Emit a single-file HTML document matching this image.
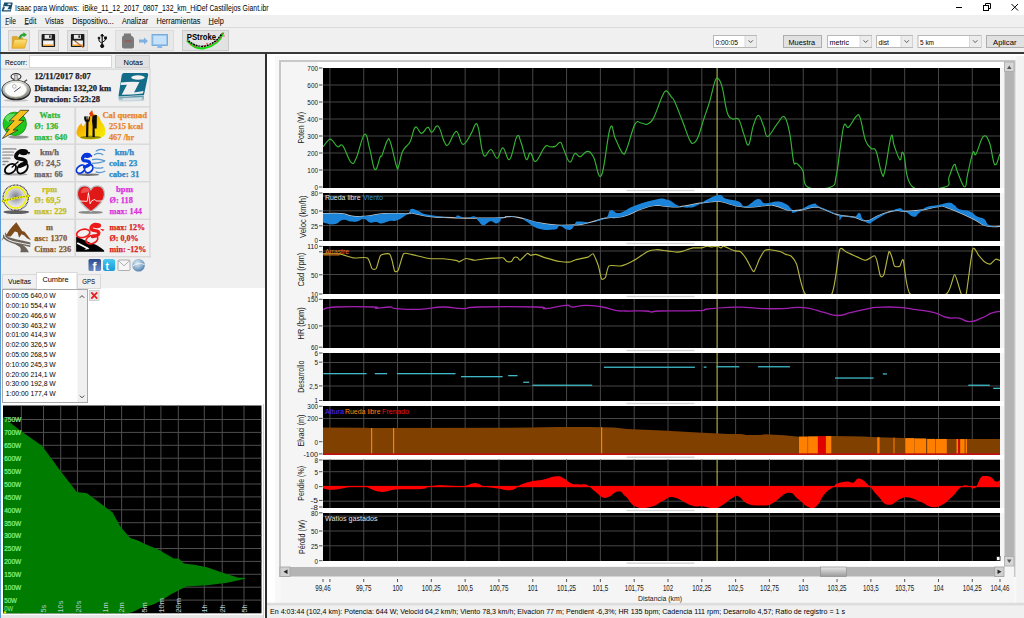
<!DOCTYPE html>
<html><head><meta charset="utf-8"><style>
html,body{margin:0;padding:0;width:1024px;height:618px;overflow:hidden;background:#f0f0f0}
svg{display:block}
text{white-space:pre}
</style></head><body>
<svg width="1024" height="618" viewBox="0 0 1024 618">
<rect x="0" y="0" width="1024" height="618" fill="#f0f0f0" />
<rect x="0" y="0" width="1024" height="15" fill="#ffffff" />
<text x="15" y="11.2" font-family="Liberation Sans" font-size="8.7" font-weight="400" fill="#000" text-anchor="start" textLength="253.6" lengthAdjust="spacingAndGlyphs" >Isaac para Windows:  iBike_11_12_2017_0807_132_km_HiDef Castillejos Giant.ibr</text>
<path d="M4.2,2.5 H12 Q12.8,2.5 12.6,3.4 L10.8,11.6 H2.2 Q1.5,11.6 1.7,10.8 Z" fill="#174e6e"/>
<ellipse cx="9.3" cy="4.3" rx="1.9" ry="0.8" fill="#fff"/>
<path d="M3.6,6.3 H9.2 L7.4,9.3 H10.6 L10.3,10.3 H3.4 L5.2,7.3 H3.4 Z" fill="#fff"/>
<line x1="956" y1="7.5" x2="962" y2="7.5" stroke="#000" stroke-width="1" />
<rect x="983.5" y="5.5" width="5" height="5" fill="none" stroke="#000" stroke-width="1" />
<path d="M985.5,5.5 V3.5 H990.5 V8.5 H988.5" fill="none" stroke="#000" stroke-width="1"/>
<line x1="1011.5" y1="4" x2="1018" y2="10.5" stroke="#000" stroke-width="1" />
<line x1="1018" y1="4" x2="1011.5" y2="10.5" stroke="#000" stroke-width="1" />
<rect x="0" y="0" width="1" height="618" fill="#5b9bd5" />
<rect x="1" y="15" width="1023" height="12" fill="#f0f0f0" />
<text x="5.2" y="23.6" font-family="Liberation Sans" font-size="8.3" font-weight="400" fill="#000" text-anchor="start" textLength="10.8" lengthAdjust="spacingAndGlyphs" >File</text>
<text x="24.6" y="23.6" font-family="Liberation Sans" font-size="8.3" font-weight="400" fill="#000" text-anchor="start" textLength="11.7" lengthAdjust="spacingAndGlyphs" >Edit</text>
<text x="45" y="23.6" font-family="Liberation Sans" font-size="8.3" font-weight="400" fill="#000" text-anchor="start" textLength="18.7" lengthAdjust="spacingAndGlyphs" >Vistas</text>
<text x="72.2" y="23.6" font-family="Liberation Sans" font-size="8.3" font-weight="400" fill="#000" text-anchor="start" textLength="41.5" lengthAdjust="spacingAndGlyphs" >Dispositivo...</text>
<text x="121.9" y="23.6" font-family="Liberation Sans" font-size="8.3" font-weight="400" fill="#000" text-anchor="start" textLength="26.2" lengthAdjust="spacingAndGlyphs" >Analizar</text>
<text x="156.5" y="23.6" font-family="Liberation Sans" font-size="8.3" font-weight="400" fill="#000" text-anchor="start" textLength="43.9" lengthAdjust="spacingAndGlyphs" >Herramientas</text>
<text x="208.6" y="23.6" font-family="Liberation Sans" font-size="8.3" font-weight="400" fill="#000" text-anchor="start" textLength="15.2" lengthAdjust="spacingAndGlyphs" >Help</text>
<line x1="5.2" y1="24.5" x2="8.7" y2="24.5" stroke="#000" stroke-width="0.6" />
<line x1="24.6" y1="24.5" x2="28.6" y2="24.5" stroke="#000" stroke-width="0.6" />
<line x1="208.6" y1="24.5" x2="213.6" y2="24.5" stroke="#000" stroke-width="0.6" />
<rect x="1" y="27" width="1023" height="1" fill="#dadada" />
<rect x="1" y="28" width="1023" height="24" fill="#f0f0f0" />
<rect x="0" y="52" width="1024" height="2" fill="#383838" />
<rect x="8.5" y="30.5" width="21" height="20" fill="#e5e5e5" stroke="#d0d0d0" stroke-width="1" />
<rect x="38.5" y="30.5" width="20" height="20" fill="#e5e5e5" stroke="#d0d0d0" stroke-width="1" />
<rect x="67.5" y="30.5" width="20" height="20" fill="#e5e5e5" stroke="#d0d0d0" stroke-width="1" />
<rect x="115.5" y="30.5" width="58" height="20" fill="#e8e8e8" stroke="#dcdcdc" stroke-width="1" />
<rect x="182.5" y="30.5" width="46" height="20" fill="#e2e2e2" stroke="#cacaca" stroke-width="1" />
<defs><linearGradient id="fold" x1="0" y1="0" x2="0" y2="1"><stop offset="0" stop-color="#fbe27a"/><stop offset="1" stop-color="#f0b428"/></linearGradient></defs>
<path d="M12.2,47.5 V37.2 q0,-0.8 0.8,-0.8 h4 l1.2,1.3 h4.5 v2" fill="#e3a82a" stroke="#c88a18" stroke-width="0.5"/>
<path d="M11.8,48.3 L14.2,40 Q14.4,39.4 15,39.4 H26.6 Q27.2,39.4 27,40 L24.6,48.3 Z" fill="url(#fold)" stroke="#d49a20" stroke-width="0.6"/>
<path d="M19.5,38.5 Q20.5,34.5 24.2,34.6" fill="none" stroke="#2aa52a" stroke-width="2.2"/>
<path d="M23.3,32.2 L27,34.8 L23.5,37.3 Z" fill="#2aa52a"/>
<rect x="41.6" y="34" width="13.5" height="13" fill="#1a1a1a" rx="0.8"/>
<rect x="44.6" y="34.8" width="7" height="4" fill="#e8e8e8"/>
<rect x="49.1" y="35.3" width="1.5" height="2.5" fill="#222"/>
<rect x="43.1" y="40.5" width="10.5" height="5.5" fill="#f4f4f4"/>
<rect x="43.1" y="44.5" width="10.5" height="1.5" fill="#f0a030"/>
<rect x="70.9" y="34" width="13.5" height="13" fill="#1a1a1a" rx="0.8"/>
<rect x="73.9" y="34.8" width="7" height="4" fill="#e8e8e8"/>
<rect x="78.4" y="35.3" width="1.5" height="2.5" fill="#222"/>
<rect x="72.4" y="40.5" width="10.5" height="5.5" fill="#f4f4f4"/>
<rect x="72.4" y="44.5" width="10.5" height="1.5" fill="#f0a030"/>
<path d="M74.9,41 L83.4,47.5" stroke="#c07030" stroke-width="1.4"/>
<path d="M74.4,40.5 L75.9,41.2" stroke="#333" stroke-width="1"/>
<g fill="#111" stroke="#111"><line x1="102.2" y1="35" x2="102.2" y2="46" stroke-width="1.2"/><circle cx="102.2" cy="46" r="1.6"/><path d="M99,38.5 v2.5 l3.2,2.5 M105.5,38 v2 l-3.3,2.5" fill="none" stroke-width="1"/><circle cx="99" cy="38" r="0.9"/><rect x="104.6" y="37" width="1.8" height="1.8"/><path d="M100.8,36 L102.2,34 L103.6,36 Z"/></g>
<path d="M124,33.5 h7 v2 q3,1 3,4 v7 q0,2 -3,2 h-6 q-3,0 -3,-2 v-8 q0,-3 2,-3 z" fill="#7a7a7a"/>
<rect x="124.5" y="40" width="7" height="2" fill="#a05050" opacity="0.6"/>
<path d="M139,39.5 h5 v-2 l4,3.5 l-4,3.5 v-2 h-5 z" fill="#7fb0e0"/>
<rect x="152" y="34.5" width="15.5" height="11" fill="#9cc8f0" stroke="#6aa0d0" stroke-width="0.8"/>
<rect x="153.5" y="36" width="12.5" height="8" fill="#c6e2fa"/>
<path d="M158,45.5 h3.5 l1,2.5 h-5.5 z" fill="#8ab8e8"/>
<text x="186.8" y="39.9" font-family="Liberation Sans" font-size="9.2" font-weight="700" fill="#000" text-anchor="start" textLength="29.2" lengthAdjust="spacingAndGlyphs" >PStroke</text>
<path d="M187,40.5 Q196,50.5 205,48 Q219,45 223.5,32.5" fill="none" stroke="#12dd12" stroke-width="2"/>
<path d="M188.5,40.8 Q197,48 205,46 Q216,43.5 222,33.5" fill="none" stroke="#000" stroke-width="1.6" stroke-dasharray="2,0.8"/>
<circle cx="187.5" cy="41" r="0.75" fill="#ff3a3a"/>
<circle cx="191" cy="44.5" r="0.75" fill="#ff3a3a"/>
<circle cx="195" cy="46.5" r="0.75" fill="#ff3a3a"/>
<circle cx="199.5" cy="46.8" r="0.75" fill="#ff3a3a"/>
<circle cx="204" cy="45.7" r="0.75" fill="#ff3a3a"/>
<circle cx="207" cy="43.6" r="0.75" fill="#ff3a3a"/>
<circle cx="210" cy="44.5" r="0.75" fill="#ff3a3a"/>
<circle cx="213.5" cy="43.5" r="0.75" fill="#ff3a3a"/>
<circle cx="217" cy="41.5" r="0.75" fill="#ff3a3a"/>
<circle cx="220" cy="38" r="0.75" fill="#ff3a3a"/>
<circle cx="223" cy="33.5" r="0.75" fill="#ff3a3a"/>
<circle cx="224" cy="36" r="0.75" fill="#ff3a3a"/>
<rect x="713.5" y="35.5" width="43" height="12" fill="#ffffff" stroke="#b8b8b8" stroke-width="1" />
<rect x="745" y="36" width="11.5" height="11" fill="#ececec" />
<line x1="745" y1="36" x2="745" y2="47" stroke="#d8d8d8" stroke-width="1" />
<path d="M748.5,40.3 l2.2,2.2 l2.2,-2.2" fill="none" stroke="#333" stroke-width="0.8"/>
<text x="715.5" y="44.7" font-family="Liberation Sans" font-size="7.6" font-weight="400" fill="#000" text-anchor="start" textLength="22.5" lengthAdjust="spacingAndGlyphs" >0:00:05</text>
<rect x="783.5" y="35.5" width="38" height="12" fill="#e1e1e1" stroke="#adadad" stroke-width="1" />
<text x="788.5" y="44.7" font-family="Liberation Sans" font-size="7.9" font-weight="400" fill="#000" text-anchor="start" textLength="26.5" lengthAdjust="spacingAndGlyphs" >Muestra</text>
<rect x="827.5" y="35.5" width="44" height="12" fill="#ffffff" stroke="#b8b8b8" stroke-width="1" />
<rect x="860" y="36" width="11.5" height="11" fill="#ececec" />
<line x1="860" y1="36" x2="860" y2="47" stroke="#d8d8d8" stroke-width="1" />
<path d="M863.5,40.3 l2.2,2.2 l2.2,-2.2" fill="none" stroke="#333" stroke-width="0.8"/>
<text x="829.5" y="44.7" font-family="Liberation Sans" font-size="7.6" font-weight="400" fill="#000" text-anchor="start" textLength="19.5" lengthAdjust="spacingAndGlyphs" >metric</text>
<rect x="876.5" y="35.5" width="36" height="12" fill="#ffffff" stroke="#b8b8b8" stroke-width="1" />
<rect x="901" y="36" width="11.5" height="11" fill="#ececec" />
<line x1="901" y1="36" x2="901" y2="47" stroke="#d8d8d8" stroke-width="1" />
<path d="M904.5,40.3 l2.2,2.2 l2.2,-2.2" fill="none" stroke="#333" stroke-width="0.8"/>
<text x="878.5" y="44.7" font-family="Liberation Sans" font-size="7.6" font-weight="400" fill="#000" text-anchor="start" textLength="10.5" lengthAdjust="spacingAndGlyphs" >dist</text>
<rect x="918.0" y="35.5" width="63" height="12" fill="#ffffff" stroke="#b8b8b8" stroke-width="1" />
<rect x="969.5" y="36" width="11.5" height="11" fill="#ececec" />
<line x1="969.5" y1="36" x2="969.5" y2="47" stroke="#d8d8d8" stroke-width="1" />
<path d="M973.0,40.3 l2.2,2.2 l2.2,-2.2" fill="none" stroke="#333" stroke-width="0.8"/>
<text x="920.0" y="44.7" font-family="Liberation Sans" font-size="7.6" font-weight="400" fill="#000" text-anchor="start" textLength="14" lengthAdjust="spacingAndGlyphs" >5 km</text>
<rect x="986.5" y="35.5" width="39" height="12" fill="#e1e1e1" stroke="#adadad" stroke-width="1" />
<text x="993" y="44.7" font-family="Liberation Sans" font-size="7.6" font-weight="400" fill="#000" text-anchor="start" textLength="23.5" lengthAdjust="spacingAndGlyphs" >Aplicar</text>
<rect x="265" y="53" width="2" height="565" fill="#303030" />
<rect x="267" y="54" width="757" height="564" fill="#ffffff" />
<rect x="262" y="54" width="3" height="564" fill="#ffffff" />
<rect x="275" y="56" width="749" height="547" fill="#f8f8f8" />
<rect x="279" y="60" width="2" height="517" fill="#c8c8c8" />
<rect x="279" y="60" width="736" height="2" fill="#c8c8c8" />
<rect x="281" y="62" width="733" height="541" fill="#f5f5f5" />
<rect x="1014" y="60" width="1.5" height="517" fill="#c8c8c8" />
<rect x="1016.5" y="56" width="7.5" height="547" fill="#f2f2f2" />
<rect x="1" y="54" width="264" height="564" fill="#f0f0f0" />
<text x="5" y="64.6" font-family="Liberation Sans" font-size="7.8" font-weight="400" fill="#000" text-anchor="start" textLength="22" lengthAdjust="spacingAndGlyphs" >Recorr:</text>
<rect x="29.5" y="55.5" width="82" height="12" fill="#ffffff" stroke="#d6d6d6" stroke-width="1" />
<rect x="115.5" y="55.5" width="34" height="12" fill="#e1e1e1" stroke="#cfcfcf" stroke-width="1" />
<text x="123.5" y="64.6" font-family="Liberation Sans" font-size="7.8" font-weight="400" fill="#000" text-anchor="start" textLength="19.5" lengthAdjust="spacingAndGlyphs" >Notas</text>
<rect x="1" y="68.5" width="149.5" height="1.3" fill="#d8d8d8" />
<rect x="1" y="106.2" width="149.5" height="1.4" fill="#d8d8d8" />
<rect x="1" y="143.5" width="149.5" height="1.4" fill="#d8d8d8" />
<rect x="1" y="181" width="149.5" height="1.4" fill="#d8d8d8" />
<rect x="1" y="218.6" width="149.5" height="1.4" fill="#d8d8d8" />
<rect x="1" y="256" width="149.5" height="1.4" fill="#d8d8d8" />
<rect x="74.3" y="107" width="1.8" height="149.5" fill="#d8d8d8" />
<rect x="149.3" y="68.5" width="1.3" height="189" fill="#d8d8d8" />
<text x="34.4" y="79.3" font-family="Liberation Serif" font-size="8.1" font-weight="700" fill="#1a1a2a" text-anchor="start" textLength="56.5" lengthAdjust="spacingAndGlyphs" stroke="#1a1a2a" stroke-width="0.25">12/11/2017 8:07</text>
<text x="34.4" y="90.5" font-family="Liberation Serif" font-size="8.1" font-weight="700" fill="#1a1a2a" text-anchor="start" textLength="76.8" lengthAdjust="spacingAndGlyphs" stroke="#1a1a2a" stroke-width="0.25">Distancia: 132,20 km</text>
<text x="34.4" y="101.7" font-family="Liberation Serif" font-size="8.1" font-weight="700" fill="#1a1a2a" text-anchor="start" textLength="65.5" lengthAdjust="spacingAndGlyphs" stroke="#1a1a2a" stroke-width="0.25">Duracion: 5:23:28</text>
<text x="39.5" y="117.6" font-family="Liberation Serif" font-size="8.5" font-weight="700" fill="#2fb52f" text-anchor="start" textLength="20.7" lengthAdjust="spacingAndGlyphs" stroke="#2fb52f" stroke-width="0.25">Watts</text>
<text x="34.3" y="128.6" font-family="Liberation Serif" font-size="8.5" font-weight="700" fill="#2fb52f" text-anchor="start" textLength="24" lengthAdjust="spacingAndGlyphs" stroke="#2fb52f" stroke-width="0.25">Ø: 136</text>
<text x="34.3" y="139.6" font-family="Liberation Serif" font-size="8.5" font-weight="700" fill="#2fb52f" text-anchor="start" textLength="33" lengthAdjust="spacingAndGlyphs" stroke="#2fb52f" stroke-width="0.25">max: 640</text>
<text x="102.4" y="117.6" font-family="Liberation Serif" font-size="8.5" font-weight="700" fill="#e8862a" text-anchor="start" textLength="44.7" lengthAdjust="spacingAndGlyphs" stroke="#e8862a" stroke-width="0.25">Cal quemad</text>
<text x="108.9" y="128.6" font-family="Liberation Serif" font-size="8.5" font-weight="700" fill="#e8862a" text-anchor="start" textLength="34.3" lengthAdjust="spacingAndGlyphs" stroke="#e8862a" stroke-width="0.25">2515 kcal</text>
<text x="108.9" y="139.6" font-family="Liberation Serif" font-size="8.5" font-weight="700" fill="#e8862a" text-anchor="start" textLength="25.2" lengthAdjust="spacingAndGlyphs" stroke="#e8862a" stroke-width="0.25">467 /hr</text>
<text x="40" y="154.9" font-family="Liberation Serif" font-size="8.5" font-weight="700" fill="#6e6060" text-anchor="start" textLength="19" lengthAdjust="spacingAndGlyphs" stroke="#6e6060" stroke-width="0.25">km/h</text>
<text x="34.3" y="165.9" font-family="Liberation Serif" font-size="8.5" font-weight="700" fill="#6e6060" text-anchor="start" textLength="26.5" lengthAdjust="spacingAndGlyphs" stroke="#6e6060" stroke-width="0.25">Ø: 24,5</text>
<text x="34.3" y="176.9" font-family="Liberation Serif" font-size="8.5" font-weight="700" fill="#6e6060" text-anchor="start" textLength="28.5" lengthAdjust="spacingAndGlyphs" stroke="#6e6060" stroke-width="0.25">max: 66</text>
<text x="114.7" y="154.9" font-family="Liberation Serif" font-size="8.5" font-weight="700" fill="#2a86c6" text-anchor="start" textLength="19.4" lengthAdjust="spacingAndGlyphs" stroke="#2a86c6" stroke-width="0.25">km/h</text>
<text x="108.9" y="165.9" font-family="Liberation Serif" font-size="8.5" font-weight="700" fill="#2a86c6" text-anchor="start" textLength="28.5" lengthAdjust="spacingAndGlyphs" stroke="#2a86c6" stroke-width="0.25">cola: 23</text>
<text x="108.9" y="176.9" font-family="Liberation Serif" font-size="8.5" font-weight="700" fill="#2a86c6" text-anchor="start" textLength="30.4" lengthAdjust="spacingAndGlyphs" stroke="#2a86c6" stroke-width="0.25">cabe: 31</text>
<text x="42" y="192.29999999999998" font-family="Liberation Serif" font-size="8.5" font-weight="700" fill="#c4bc1c" text-anchor="start" textLength="15" lengthAdjust="spacingAndGlyphs" stroke="#c4bc1c" stroke-width="0.25">rpm</text>
<text x="34.3" y="203.29999999999998" font-family="Liberation Serif" font-size="8.5" font-weight="700" fill="#c4bc1c" text-anchor="start" textLength="26.5" lengthAdjust="spacingAndGlyphs" stroke="#c4bc1c" stroke-width="0.25">Ø: 69,5</text>
<text x="34.3" y="214.29999999999998" font-family="Liberation Serif" font-size="8.5" font-weight="700" fill="#c4bc1c" text-anchor="start" textLength="32.4" lengthAdjust="spacingAndGlyphs" stroke="#c4bc1c" stroke-width="0.25">max: 229</text>
<text x="116" y="192.29999999999998" font-family="Liberation Serif" font-size="8.5" font-weight="700" fill="#dd30dd" text-anchor="start" textLength="17" lengthAdjust="spacingAndGlyphs" stroke="#dd30dd" stroke-width="0.25">bpm</text>
<text x="109.5" y="203.29999999999998" font-family="Liberation Serif" font-size="8.5" font-weight="700" fill="#dd30dd" text-anchor="start" textLength="23.3" lengthAdjust="spacingAndGlyphs" stroke="#dd30dd" stroke-width="0.25">Ø: 118</text>
<text x="109.5" y="214.29999999999998" font-family="Liberation Serif" font-size="8.5" font-weight="700" fill="#dd30dd" text-anchor="start" textLength="32.5" lengthAdjust="spacingAndGlyphs" stroke="#dd30dd" stroke-width="0.25">max: 144</text>
<text x="46" y="229.7" font-family="Liberation Serif" font-size="8.5" font-weight="700" fill="#8a5a2c" text-anchor="start" textLength="7" lengthAdjust="spacingAndGlyphs" stroke="#8a5a2c" stroke-width="0.25">m</text>
<text x="34.3" y="240.7" font-family="Liberation Serif" font-size="8.5" font-weight="700" fill="#8a5a2c" text-anchor="start" textLength="33" lengthAdjust="spacingAndGlyphs" stroke="#8a5a2c" stroke-width="0.25">asc: 1370</text>
<text x="34.3" y="251.7" font-family="Liberation Serif" font-size="8.5" font-weight="700" fill="#8a5a2c" text-anchor="start" textLength="36.9" lengthAdjust="spacingAndGlyphs" stroke="#8a5a2c" stroke-width="0.25">Cima: 236</text>
<text x="109.5" y="229.7" font-family="Liberation Serif" font-size="8.5" font-weight="700" fill="#dd2020" text-anchor="start" textLength="35.5" lengthAdjust="spacingAndGlyphs" stroke="#dd2020" stroke-width="0.25">max: 12%</text>
<text x="109.5" y="240.7" font-family="Liberation Serif" font-size="8.5" font-weight="700" fill="#dd2020" text-anchor="start" textLength="29.2" lengthAdjust="spacingAndGlyphs" stroke="#dd2020" stroke-width="0.25">Ø: 0,0%</text>
<text x="109.5" y="251.7" font-family="Liberation Serif" font-size="8.5" font-weight="700" fill="#dd2020" text-anchor="start" textLength="36.9" lengthAdjust="spacingAndGlyphs" stroke="#dd2020" stroke-width="0.25">min: -12%</text>
<g transform="translate(0,68) scale(0.06154)"><defs><linearGradient id="swg" x1="0" y1="0" x2="0.3" y2="1"><stop offset="0" stop-color="#f4f4f4"/><stop offset="0.5" stop-color="#b8b8b8"/><stop offset="1" stop-color="#8a8a8a"/></linearGradient></defs>
<ellipse cx="262" cy="527" rx="200" ry="20" fill="#888" opacity="0.45"/>
<ellipse cx="260" cy="140" rx="80" ry="48" fill="none" stroke="#303030" stroke-width="18"/>
<rect x="232" y="120" width="55" height="85" fill="#c8c8c8" stroke="#666" stroke-width="7"/>
<line x1="395" y1="222" x2="440" y2="192" stroke="#444" stroke-width="20"/>
<ellipse cx="262" cy="360" rx="238" ry="166" fill="#262626"/>
<ellipse cx="262" cy="352" rx="224" ry="150" fill="url(#swg)"/>
<ellipse cx="255" cy="350" rx="182" ry="122" fill="#fbfbfb" stroke="#c8d4a8" stroke-width="9"/>
<circle cx="232" cy="300" r="30" fill="none" stroke="#666" stroke-width="7"/>
<line x1="232" y1="385" x2="335" y2="310" stroke="#262626" stroke-width="13"/></g>
<g transform="translate(110,66) scale(0.06472)"><path d="M215,108 H570 Q595,108 590,140 L525,448 L130,472 L182,140 Q190,108 215,108 Z" fill="#146d88"/>
<defs><linearGradient id="rfl" x1="0" y1="0" x2="0" y2="1"><stop offset="0" stop-color="#2a7a94" stop-opacity="0.85"/><stop offset="1" stop-color="#2a7a94" stop-opacity="0"/></linearGradient></defs><path d="M130,478 L520,456 L530,540 L140,560 Z" fill="url(#rfl)"/><path d="M190,500 Q330,490 505,480 L480,520 Q330,525 200,530 Z" fill="#f0f0f0" opacity="0.7"/>
<ellipse cx="432" cy="178" rx="105" ry="34" fill="#f2f2f2"/>
<path d="M170,255 Q300,240 455,248 L372,408 Q450,400 520,385 L505,425 Q330,445 182,445 L262,290 L165,292 Z" fill="#f0f0f0"/></g>
<g transform="translate(0,106) scale(0.06154)"><ellipse cx="300" cy="505" rx="170" ry="26" fill="#444" opacity="0.55"/>
<circle cx="240" cy="290" r="190" fill="#1ec81e" stroke="#0c8a0c" stroke-width="12"/>
<ellipse cx="195" cy="200" rx="110" ry="70" fill="#8cf08c" opacity="0.6"/>
<path d="M330,70 L470,70 L305,232 L392,236 L212,392 L292,390 L40,528 L150,376 L98,380 L230,238 L150,244 Z" fill="#f4c21a" stroke="#262626" stroke-width="12" stroke-linejoin="round"/></g>
<g transform="translate(74,106) scale(0.06154)"><defs><linearGradient id="fg" x1="0" y1="0" x2="1" y2="1"><stop offset="0" stop-color="#f07800"/><stop offset="0.55" stop-color="#f8c800"/><stop offset="1" stop-color="#f4f400"/></linearGradient></defs>
<path d="M40,450 Q40,350 120,280 Q130,330 160,330 Q200,220 255,180 Q265,120 295,70 Q300,140 350,140 Q420,170 430,230 Q440,270 470,290 Q520,360 505,460 Q480,540 280,545 Q60,545 40,450 Z" fill="url(#fg)"/>
<path d="M245,120 Q270,90 295,70 Q300,120 320,150 L270,170 Z" fill="#e83a10"/>
<ellipse cx="270" cy="510" rx="170" ry="25" fill="#6a6a00" opacity="0.7"/>
<path d="M165,170 Q160,250 200,260 L195,505 L232,505 L235,260 Q265,250 260,170 L245,170 L245,220 L232,220 L232,168 L218,168 L218,220 L205,220 L205,168 Z" fill="#0a0a0a"/>
<path d="M300,160 Q340,140 372,148 L368,365 L335,365 L338,505 L300,505 L302,330 Q285,240 300,160 Z" fill="#0a0a0a"/></g>
<g transform="translate(0,143) scale(0.06154)"><g fill="none" stroke="#8a8a8a" stroke-width="26" stroke-linecap="round">
<line x1="50" y1="100" x2="255" y2="100"/><line x1="50" y1="150" x2="215" y2="150"/><line x1="50" y1="200" x2="210" y2="200"/><line x1="50" y1="250" x2="160" y2="250"/><line x1="50" y1="300" x2="130" y2="300"/><line x1="50" y1="350" x2="80" y2="350"/></g>
<g fill="none" stroke="#f4f4f4" stroke-width="12" stroke-linecap="round">
<line x1="55" y1="112" x2="250" y2="112"/><line x1="55" y1="162" x2="210" y2="162"/><line x1="55" y1="212" x2="205" y2="212"/><line x1="55" y1="262" x2="155" y2="262"/></g>
<ellipse cx="250" cy="510" rx="200" ry="20" fill="#555" opacity="0.45"/>
<ellipse cx="170" cy="420" rx="100" ry="68" transform="rotate(-35 170 420)" fill="#f8f8f8" stroke="#080808" stroke-width="30"/>
<ellipse cx="365" cy="410" rx="100" ry="70" transform="rotate(-45 365 410)" fill="#f8f8f8" stroke="#080808" stroke-width="30"/>
<path d="M420,140 Q320,100 265,190 Q240,250 320,258 Q410,265 420,310 Q420,350 320,375" fill="none" stroke="#080808" stroke-width="62" stroke-linecap="round"/>
<ellipse cx="385" cy="150" rx="70" ry="48" fill="#080808"/>
<path d="M440,140 L490,150 L470,190 Z" fill="#080808"/>
<line x1="300" y1="300" x2="190" y2="400" stroke="#080808" stroke-width="22"/></g>
<g transform="translate(74,143) scale(0.06154)"><g fill="none" stroke="#3a88cc" stroke-width="20" stroke-linecap="round" opacity="0.85">
<path d="M360,130 Q430,80 500,120"/><path d="M330,190 Q400,150 470,190"/><path d="M300,270 Q400,250 500,290"/><path d="M300,330 Q400,330 490,300"/><path d="M330,400 Q400,420 470,400"/><path d="M360,470 Q430,500 500,460"/></g>
<ellipse cx="230" cy="515" rx="180" ry="20" fill="#222" opacity="0.6"/>
<ellipse cx="110" cy="425" rx="80" ry="55" transform="rotate(-40 110 425)" fill="#f4f4f4" stroke="#0636dc" stroke-width="28"/>
<ellipse cx="240" cy="415" rx="75" ry="60" transform="rotate(-50 240 415)" fill="#f4f4f4" stroke="#0636dc" stroke-width="28"/>
<path d="M250,200 Q170,170 140,240 Q125,290 195,290 Q265,295 255,340 Q245,370 170,390" fill="none" stroke="#0636dc" stroke-width="52" stroke-linecap="round"/>
<ellipse cx="215" cy="200" rx="62" ry="42" fill="#0636dc"/>
<path d="M265,195 L300,200 L285,235 Z" fill="#0636dc"/></g>
<g transform="translate(0,181) scale(0.06154)"><ellipse cx="265" cy="505" rx="210" ry="30" fill="#111" opacity="0.65"/>
<circle cx="255" cy="270" r="205" fill="none" stroke="#222" stroke-width="20" stroke-dasharray="14,10"/>
<defs><radialGradient id="gg" cx="0.5" cy="0.45" r="0.55"><stop offset="0" stop-color="#7a7a8a"/><stop offset="0.6" stop-color="#d0d0d8"/><stop offset="1" stop-color="#f4f4f4"/></radialGradient></defs>
<circle cx="255" cy="270" r="185" fill="url(#gg)"/>
<circle cx="255" cy="270" r="170" fill="none" stroke="#f2f200" stroke-width="26"/>
<path d="M30,330 Q250,270 490,240" fill="none" stroke="#f2f200" stroke-width="34"/>
<path d="M30,330 Q250,270 490,240" fill="none" stroke="#111" stroke-width="10" stroke-dasharray="20,25"/></g>
<g transform="translate(74,181) scale(0.06154)"><ellipse cx="270" cy="510" rx="200" ry="24" fill="#333" opacity="0.55"/>
<path d="M275,500 Q60,340 55,230 Q50,90 160,80 Q240,75 275,140 Q310,75 390,80 Q500,90 495,230 Q490,340 275,500 Z" fill="#e01818" stroke="#b8c0c4" stroke-width="22"/>
<path d="M110,200 Q120,110 190,110 Q250,115 260,170 Q200,190 110,200 Z" fill="#ff8080" opacity="0.55"/>
<path d="M75,325 L215,330 L235,190 L262,370 L290,320 L340,300 L360,325 L470,325" fill="none" stroke="#ffffff" stroke-width="14"/></g>
<g transform="translate(0,218) scale(0.06154)"><path d="M15,375 L70,290 L110,265 L150,200 L200,140 L265,70 L320,150 L360,210 L400,225 L450,290 L505,360 L440,330 L395,285 L350,265 L310,320 L285,230 L240,220 L175,300 L120,300 L70,320 Z" fill="#7e4c1c"/>
<path d="M95,230 Q30,300 120,360 Q250,420 320,470 Q350,500 330,555 L470,555 Q430,460 320,410 Q190,360 130,310 Q95,270 95,230 Z" fill="#6a645c"/>
<path d="M50,270 Q20,360 200,410 Q360,440 490,470 L495,400 Q380,370 260,345 Q100,310 50,270 Z" fill="#6a645c"/>
<path d="M75,255 Q55,335 210,382 Q350,412 492,438" fill="none" stroke="#f0f0f0" stroke-width="16"/></g>
<g transform="translate(74,218) scale(0.06154)"><path d="M35,300 L35,550 L490,550 L490,530 Q360,420 300,420 Z" fill="#000"/>
<path d="M60,395 L225,480 L205,455 L250,505 L170,515 L195,495 L45,420 Z" fill="#fff"/>
<ellipse cx="150" cy="250" rx="110" ry="65" transform="rotate(-15 150 250)" fill="none" stroke="#ee1a1a" stroke-width="26"/>
<ellipse cx="290" cy="350" rx="100" ry="65" transform="rotate(-20 290 350)" fill="none" stroke="#ee1a1a" stroke-width="26"/>
<path d="M410,120 Q320,80 280,150 Q260,200 340,205 Q420,215 400,260 Q385,290 300,300" fill="none" stroke="#ee1a1a" stroke-width="55" stroke-linecap="round"/>
<ellipse cx="370" cy="125" rx="70" ry="40" fill="#ee1a1a"/>
<path d="M420,175 L495,185 L470,215 Z" fill="#ee1a1a"/></g>
<defs><linearGradient id="fbg" x1="0" y1="0" x2="0" y2="1"><stop offset="0" stop-color="#2c4a8a"/><stop offset="1" stop-color="#6a8ac8"/></linearGradient><linearGradient id="twg" x1="0" y1="0" x2="0" y2="1"><stop offset="0" stop-color="#48c8f0"/><stop offset="1" stop-color="#1a9ad8"/></linearGradient><radialGradient id="glg" cx="0.4" cy="0.35" r="0.7"><stop offset="0" stop-color="#e0ecf4"/><stop offset="0.6" stop-color="#8aaecc"/><stop offset="1" stop-color="#4a7aa8"/></radialGradient></defs>
<rect x="88.5" y="259" width="12.5" height="12" rx="1.5" fill="url(#fbg)"/><text x="92.5" y="270.8" font-family="Liberation Sans" font-weight="700" font-size="12" fill="#fff">f</text>
<rect x="103" y="259" width="12.2" height="12" rx="2.5" fill="url(#twg)"/><text x="105.6" y="269.5" font-family="Liberation Sans" font-weight="700" font-size="10.5" fill="#fff">t</text>
<rect x="118" y="260" width="12" height="10.5" rx="1" fill="#f6f6f6" stroke="#9a9a9a" stroke-width="0.8"/><path d="M118.3,260.5 L124,265.8 L129.7,260.5" fill="none" stroke="#9a9a9a" stroke-width="0.8"/>
<circle cx="138.5" cy="265.2" r="6.3" fill="url(#glg)"/><path d="M132.5,266 Q138.5,262 144.5,264.5" fill="none" stroke="#f0f4f8" stroke-width="0.9"/>
<rect x="1" y="288" width="264" height="116" fill="#ffffff" />
<rect x="2.5" y="274.5" width="34" height="14" fill="#f0f0f0" stroke="#d9d9d9" stroke-width="1" />
<rect x="77.5" y="274.5" width="23" height="14" fill="#f0f0f0" stroke="#d9d9d9" stroke-width="1" />
<rect x="36.5" y="272.5" width="40.5" height="16.5" fill="#ffffff" stroke="#d9d9d9" stroke-width="1" />
<rect x="37" y="288" width="39.5" height="2" fill="#ffffff" />
<text x="8" y="283.5" font-family="Liberation Sans" font-size="7.8" font-weight="400" fill="#000" text-anchor="start" textLength="23" lengthAdjust="spacingAndGlyphs" >Vueltas</text>
<text x="42.4" y="282.2" font-family="Liberation Sans" font-size="7.8" font-weight="400" fill="#000" text-anchor="start" textLength="26.3" lengthAdjust="spacingAndGlyphs" >Cumbre</text>
<text x="82.2" y="283.5" font-family="Liberation Sans" font-size="7.8" font-weight="400" fill="#000" text-anchor="start" textLength="12.8" lengthAdjust="spacingAndGlyphs" >GPS</text>
<rect x="2.5" y="289.5" width="85" height="113" fill="#ffffff" stroke="#a8a8a8" stroke-width="1" />
<rect x="77.5" y="290" width="9.5" height="112" fill="#f0f0f0" />
<path d="M79.8,297.8 L82,295.6 L84.2,297.8" fill="none" stroke="#333" stroke-width="0.9"/>
<path d="M79.8,395.6 L82,397.8 L84.2,395.6" fill="none" stroke="#333" stroke-width="0.9"/>
<text x="5.8" y="298.1" font-family="Liberation Sans" font-size="8" font-weight="400" fill="#000" text-anchor="start" textLength="50" lengthAdjust="spacingAndGlyphs" >0:00:05 640,0 W</text>
<text x="5.8" y="307.91" font-family="Liberation Sans" font-size="8" font-weight="400" fill="#000" text-anchor="start" textLength="50" lengthAdjust="spacingAndGlyphs" >0:00:10 554,4 W</text>
<text x="5.8" y="317.72" font-family="Liberation Sans" font-size="8" font-weight="400" fill="#000" text-anchor="start" textLength="50" lengthAdjust="spacingAndGlyphs" >0:00:20 466,6 W</text>
<text x="5.8" y="327.53000000000003" font-family="Liberation Sans" font-size="8" font-weight="400" fill="#000" text-anchor="start" textLength="50" lengthAdjust="spacingAndGlyphs" >0:00:30 463,2 W</text>
<text x="5.8" y="337.34000000000003" font-family="Liberation Sans" font-size="8" font-weight="400" fill="#000" text-anchor="start" textLength="50" lengthAdjust="spacingAndGlyphs" >0:01:00 414,3 W</text>
<text x="5.8" y="347.15000000000003" font-family="Liberation Sans" font-size="8" font-weight="400" fill="#000" text-anchor="start" textLength="50" lengthAdjust="spacingAndGlyphs" >0:02:00 326,5 W</text>
<text x="5.8" y="356.96000000000004" font-family="Liberation Sans" font-size="8" font-weight="400" fill="#000" text-anchor="start" textLength="50" lengthAdjust="spacingAndGlyphs" >0:05:00 268,5 W</text>
<text x="5.8" y="366.77000000000004" font-family="Liberation Sans" font-size="8" font-weight="400" fill="#000" text-anchor="start" textLength="50" lengthAdjust="spacingAndGlyphs" >0:10:00 245,3 W</text>
<text x="5.8" y="376.58000000000004" font-family="Liberation Sans" font-size="8" font-weight="400" fill="#000" text-anchor="start" textLength="50" lengthAdjust="spacingAndGlyphs" >0:20:00 214,1 W</text>
<text x="5.8" y="386.39000000000004" font-family="Liberation Sans" font-size="8" font-weight="400" fill="#000" text-anchor="start" textLength="50" lengthAdjust="spacingAndGlyphs" >0:30:00 192,8 W</text>
<text x="5.8" y="396.20000000000005" font-family="Liberation Sans" font-size="8" font-weight="400" fill="#000" text-anchor="start" textLength="50" lengthAdjust="spacingAndGlyphs" >1:00:00 177,4 W</text>
<rect x="89.5" y="290.5" width="9.5" height="10" fill="#e8e8e8" stroke="#d0d0d0" stroke-width="1" />
<path d="M91.3,292.3 L97.2,298.7 M97.2,292.3 L91.3,298.7" stroke="#e82020" stroke-width="1.8"/>
<rect x="1" y="403" width="264" height="215" fill="#ffffff" />
<rect x="263" y="404" width="0.8" height="214" fill="#c8c8c8" />
<rect x="1" y="615" width="262" height="3" fill="#e6e6e6" />
<rect x="3" y="405.5" width="258.5" height="207.8" fill="#000000" />
<rect x="3" y="599.6" width="258.5" height="1" fill="#4e4e4e" />
<rect x="3" y="586.7" width="258.5" height="1" fill="#4e4e4e" />
<rect x="3" y="573.8" width="258.5" height="1" fill="#4e4e4e" />
<rect x="3" y="560.9" width="258.5" height="1" fill="#4e4e4e" />
<rect x="3" y="548.0" width="258.5" height="1" fill="#4e4e4e" />
<rect x="3" y="535.1" width="258.5" height="1" fill="#4e4e4e" />
<rect x="3" y="522.2" width="258.5" height="1" fill="#4e4e4e" />
<rect x="3" y="509.3" width="258.5" height="1" fill="#4e4e4e" />
<rect x="3" y="496.4" width="258.5" height="1" fill="#4e4e4e" />
<rect x="3" y="483.5" width="258.5" height="1" fill="#4e4e4e" />
<rect x="3" y="470.6" width="258.5" height="1" fill="#4e4e4e" />
<rect x="3" y="457.7" width="258.5" height="1" fill="#4e4e4e" />
<rect x="3" y="444.79999999999995" width="258.5" height="1" fill="#4e4e4e" />
<rect x="3" y="431.9" width="258.5" height="1" fill="#4e4e4e" />
<rect x="3" y="419.0" width="258.5" height="1" fill="#4e4e4e" />
<rect x="20.8" y="405.5" width="1" height="207.8" fill="#4e4e4e" />
<rect x="43.0" y="405.5" width="1" height="207.8" fill="#4e4e4e" />
<rect x="60.2" y="405.5" width="1" height="207.8" fill="#4e4e4e" />
<rect x="76.9" y="405.5" width="1" height="207.8" fill="#4e4e4e" />
<rect x="104.0" y="405.5" width="1" height="207.8" fill="#4e4e4e" />
<rect x="121.1" y="405.5" width="1" height="207.8" fill="#4e4e4e" />
<rect x="143.8" y="405.5" width="1" height="207.8" fill="#4e4e4e" />
<rect x="160.4" y="405.5" width="1" height="207.8" fill="#4e4e4e" />
<rect x="177.8" y="405.5" width="1" height="207.8" fill="#4e4e4e" />
<rect x="203.8" y="405.5" width="1" height="207.8" fill="#4e4e4e" />
<rect x="221.7" y="405.5" width="1" height="207.8" fill="#4e4e4e" />
<rect x="243.5" y="405.5" width="1" height="207.8" fill="#4e4e4e" />
<polygon points="3.2,417.2 20.3,430.5 41.9,445.8 52.5,460.0 59.7,469.9 76.8,492.0 87.0,493.3 112.6,512.5 120.3,526.5 130.2,537.9 137.9,540.5 145.6,544.3 158.3,549.4 173.7,558.4 178.8,558.4 183.9,563.5 194.1,564.8 206.9,567.3 222.2,572.4 237.6,577.6 245.7,578.1 245.2,578.8 227.3,582.7 206.9,585.2 186.4,586.5 178.8,590.3 171.1,594.2 162.2,600.0 153.2,604.4 140.4,608.2 132.8,612.1 127.7,613.3 3.2,613.3" fill="#007d00" />
<text x="4.2" y="602.9" font-family="Liberation Sans" font-size="7.8" font-weight="400" fill="#92f592" text-anchor="start" textLength="12.8" lengthAdjust="spacingAndGlyphs" stroke="#92f592" stroke-width="0.2">50W</text>
<text x="4.2" y="590.0" font-family="Liberation Sans" font-size="7.8" font-weight="400" fill="#92f592" text-anchor="start" textLength="17.1" lengthAdjust="spacingAndGlyphs" stroke="#92f592" stroke-width="0.2">100W</text>
<text x="4.2" y="577.0999999999999" font-family="Liberation Sans" font-size="7.8" font-weight="400" fill="#92f592" text-anchor="start" textLength="17.1" lengthAdjust="spacingAndGlyphs" stroke="#92f592" stroke-width="0.2">150W</text>
<text x="4.2" y="564.1999999999999" font-family="Liberation Sans" font-size="7.8" font-weight="400" fill="#92f592" text-anchor="start" textLength="17.1" lengthAdjust="spacingAndGlyphs" stroke="#92f592" stroke-width="0.2">200W</text>
<text x="4.2" y="551.3" font-family="Liberation Sans" font-size="7.8" font-weight="400" fill="#92f592" text-anchor="start" textLength="17.1" lengthAdjust="spacingAndGlyphs" stroke="#92f592" stroke-width="0.2">250W</text>
<text x="4.2" y="538.4" font-family="Liberation Sans" font-size="7.8" font-weight="400" fill="#92f592" text-anchor="start" textLength="17.1" lengthAdjust="spacingAndGlyphs" stroke="#92f592" stroke-width="0.2">300W</text>
<text x="4.2" y="525.5" font-family="Liberation Sans" font-size="7.8" font-weight="400" fill="#92f592" text-anchor="start" textLength="17.1" lengthAdjust="spacingAndGlyphs" stroke="#92f592" stroke-width="0.2">350W</text>
<text x="4.2" y="512.6" font-family="Liberation Sans" font-size="7.8" font-weight="400" fill="#92f592" text-anchor="start" textLength="17.1" lengthAdjust="spacingAndGlyphs" stroke="#92f592" stroke-width="0.2">400W</text>
<text x="4.2" y="499.7" font-family="Liberation Sans" font-size="7.8" font-weight="400" fill="#92f592" text-anchor="start" textLength="17.1" lengthAdjust="spacingAndGlyphs" stroke="#92f592" stroke-width="0.2">450W</text>
<text x="4.2" y="486.8" font-family="Liberation Sans" font-size="7.8" font-weight="400" fill="#92f592" text-anchor="start" textLength="17.1" lengthAdjust="spacingAndGlyphs" stroke="#92f592" stroke-width="0.2">500W</text>
<text x="4.2" y="473.90000000000003" font-family="Liberation Sans" font-size="7.8" font-weight="400" fill="#92f592" text-anchor="start" textLength="17.1" lengthAdjust="spacingAndGlyphs" stroke="#92f592" stroke-width="0.2">550W</text>
<text x="4.2" y="461.0" font-family="Liberation Sans" font-size="7.8" font-weight="400" fill="#92f592" text-anchor="start" textLength="17.1" lengthAdjust="spacingAndGlyphs" stroke="#92f592" stroke-width="0.2">600W</text>
<text x="4.2" y="448.09999999999997" font-family="Liberation Sans" font-size="7.8" font-weight="400" fill="#92f592" text-anchor="start" textLength="17.1" lengthAdjust="spacingAndGlyphs" stroke="#92f592" stroke-width="0.2">650W</text>
<text x="4.2" y="435.2" font-family="Liberation Sans" font-size="7.8" font-weight="400" fill="#92f592" text-anchor="start" textLength="17.1" lengthAdjust="spacingAndGlyphs" stroke="#92f592" stroke-width="0.2">700W</text>
<text x="4.2" y="422.3" font-family="Liberation Sans" font-size="7.8" font-weight="400" fill="#92f592" text-anchor="start" textLength="17.1" lengthAdjust="spacingAndGlyphs" stroke="#92f592" stroke-width="0.2">750W</text>
<text x="4.2" y="611" font-family="Liberation Sans" font-size="7.6" font-weight="400" fill="#92f592" text-anchor="start" textLength="8.8" lengthAdjust="spacingAndGlyphs" >0W</text>
<text transform="translate(46.0,612.5) rotate(-90)" font-family="Liberation Sans" font-size="7.4" fill="#b8d0d0">5s</text>
<text transform="translate(62.5,612.5) rotate(-90)" font-family="Liberation Sans" font-size="7.4" fill="#b8d0d0">10s</text>
<text transform="translate(80.5,612.5) rotate(-90)" font-family="Liberation Sans" font-size="7.4" fill="#b8d0d0">20s</text>
<text transform="translate(107.5,612.5) rotate(-90)" font-family="Liberation Sans" font-size="7.4" fill="#b8d0d0">1m</text>
<text transform="translate(124.0,612.5) rotate(-90)" font-family="Liberation Sans" font-size="7.4" fill="#b8d0d0">2m</text>
<text transform="translate(146.5,612.5) rotate(-90)" font-family="Liberation Sans" font-size="7.4" fill="#b8d0d0">5m</text>
<text transform="translate(163.5,612.5) rotate(-90)" font-family="Liberation Sans" font-size="7.4" fill="#b8d0d0">10m</text>
<text transform="translate(180.5,612.5) rotate(-90)" font-family="Liberation Sans" font-size="7.4" fill="#b8d0d0">20m</text>
<text transform="translate(206.5,612.5) rotate(-90)" font-family="Liberation Sans" font-size="7.4" fill="#b8d0d0">1h</text>
<text transform="translate(224.5,612.5) rotate(-90)" font-family="Liberation Sans" font-size="7.4" fill="#b8d0d0">2h</text>
<text transform="translate(246.5,612.5) rotate(-90)" font-family="Liberation Sans" font-size="7.4" fill="#b8d0d0">5h</text>
<circle cx="5" cy="612.5" r="1.2" fill="#e8e000"/>
<rect x="323" y="68" width="677" height="120" fill="#000" />
<rect x="323" y="193" width="677" height="48" fill="#000" />
<rect x="323" y="246" width="677" height="48" fill="#000" />
<rect x="323" y="299" width="677" height="49" fill="#000" />
<rect x="323" y="353" width="677" height="48" fill="#000" />
<rect x="323" y="406" width="677" height="49" fill="#000" />
<rect x="323" y="459.5" width="677" height="48.5" fill="#000" />
<rect x="323" y="513" width="677" height="48" fill="#000" />
<rect x="318" y="188" width="686" height="5" fill="#ffffff" />
<rect x="318" y="241" width="686" height="5" fill="#ffffff" />
<rect x="318" y="294" width="686" height="5" fill="#ffffff" />
<rect x="318" y="348" width="686" height="5" fill="#ffffff" />
<rect x="318" y="401" width="686" height="5" fill="#ffffff" />
<rect x="318" y="455" width="686" height="4.5" fill="#ffffff" />
<rect x="318" y="508" width="686" height="5" fill="#ffffff" />
<rect x="318" y="62" width="686" height="6" fill="#ffffff" />
<rect x="318" y="561" width="686" height="5" fill="#ffffff" />
<rect x="329.4" y="68" width="1" height="120" fill="#474747" />
<rect x="363.21" y="68" width="1" height="120" fill="#474747" />
<rect x="397.02" y="68" width="1" height="120" fill="#474747" />
<rect x="430.83" y="68" width="1" height="120" fill="#474747" />
<rect x="464.64" y="68" width="1" height="120" fill="#474747" />
<rect x="498.45" y="68" width="1" height="120" fill="#474747" />
<rect x="532.26" y="68" width="1" height="120" fill="#474747" />
<rect x="566.0699999999999" y="68" width="1" height="120" fill="#474747" />
<rect x="599.88" y="68" width="1" height="120" fill="#474747" />
<rect x="633.69" y="68" width="1" height="120" fill="#474747" />
<rect x="667.5" y="68" width="1" height="120" fill="#474747" />
<rect x="701.31" y="68" width="1" height="120" fill="#474747" />
<rect x="735.12" y="68" width="1" height="120" fill="#474747" />
<rect x="768.9300000000001" y="68" width="1" height="120" fill="#474747" />
<rect x="802.74" y="68" width="1" height="120" fill="#474747" />
<rect x="836.55" y="68" width="1" height="120" fill="#474747" />
<rect x="870.36" y="68" width="1" height="120" fill="#474747" />
<rect x="904.17" y="68" width="1" height="120" fill="#474747" />
<rect x="937.98" y="68" width="1" height="120" fill="#474747" />
<rect x="971.7900000000001" y="68" width="1" height="120" fill="#474747" />
<rect x="323" y="84.5" width="677" height="1" fill="#474747" />
<rect x="323" y="101.5" width="677" height="1" fill="#474747" />
<rect x="323" y="118.5" width="677" height="1" fill="#474747" />
<rect x="323" y="135.5" width="677" height="1" fill="#474747" />
<rect x="323" y="152.5" width="677" height="1" fill="#474747" />
<rect x="323" y="169.5" width="677" height="1" fill="#474747" />
<rect x="329.4" y="193" width="1" height="48" fill="#474747" />
<rect x="363.21" y="193" width="1" height="48" fill="#474747" />
<rect x="397.02" y="193" width="1" height="48" fill="#474747" />
<rect x="430.83" y="193" width="1" height="48" fill="#474747" />
<rect x="464.64" y="193" width="1" height="48" fill="#474747" />
<rect x="498.45" y="193" width="1" height="48" fill="#474747" />
<rect x="532.26" y="193" width="1" height="48" fill="#474747" />
<rect x="566.0699999999999" y="193" width="1" height="48" fill="#474747" />
<rect x="599.88" y="193" width="1" height="48" fill="#474747" />
<rect x="633.69" y="193" width="1" height="48" fill="#474747" />
<rect x="667.5" y="193" width="1" height="48" fill="#474747" />
<rect x="701.31" y="193" width="1" height="48" fill="#474747" />
<rect x="735.12" y="193" width="1" height="48" fill="#474747" />
<rect x="768.9300000000001" y="193" width="1" height="48" fill="#474747" />
<rect x="802.74" y="193" width="1" height="48" fill="#474747" />
<rect x="836.55" y="193" width="1" height="48" fill="#474747" />
<rect x="870.36" y="193" width="1" height="48" fill="#474747" />
<rect x="904.17" y="193" width="1" height="48" fill="#474747" />
<rect x="937.98" y="193" width="1" height="48" fill="#474747" />
<rect x="971.7900000000001" y="193" width="1" height="48" fill="#474747" />
<rect x="323" y="195.5" width="677" height="1" fill="#474747" />
<rect x="323" y="210.3" width="677" height="1" fill="#474747" />
<rect x="323" y="225.0" width="677" height="1" fill="#474747" />
<rect x="329.4" y="246" width="1" height="48" fill="#474747" />
<rect x="363.21" y="246" width="1" height="48" fill="#474747" />
<rect x="397.02" y="246" width="1" height="48" fill="#474747" />
<rect x="430.83" y="246" width="1" height="48" fill="#474747" />
<rect x="464.64" y="246" width="1" height="48" fill="#474747" />
<rect x="498.45" y="246" width="1" height="48" fill="#474747" />
<rect x="532.26" y="246" width="1" height="48" fill="#474747" />
<rect x="566.0699999999999" y="246" width="1" height="48" fill="#474747" />
<rect x="599.88" y="246" width="1" height="48" fill="#474747" />
<rect x="633.69" y="246" width="1" height="48" fill="#474747" />
<rect x="667.5" y="246" width="1" height="48" fill="#474747" />
<rect x="701.31" y="246" width="1" height="48" fill="#474747" />
<rect x="735.12" y="246" width="1" height="48" fill="#474747" />
<rect x="768.9300000000001" y="246" width="1" height="48" fill="#474747" />
<rect x="802.74" y="246" width="1" height="48" fill="#474747" />
<rect x="836.55" y="246" width="1" height="48" fill="#474747" />
<rect x="870.36" y="246" width="1" height="48" fill="#474747" />
<rect x="904.17" y="246" width="1" height="48" fill="#474747" />
<rect x="937.98" y="246" width="1" height="48" fill="#474747" />
<rect x="971.7900000000001" y="246" width="1" height="48" fill="#474747" />
<rect x="323" y="250.5" width="677" height="1" fill="#474747" />
<rect x="323" y="274.0" width="677" height="1" fill="#474747" />
<rect x="329.4" y="299" width="1" height="49" fill="#474747" />
<rect x="363.21" y="299" width="1" height="49" fill="#474747" />
<rect x="397.02" y="299" width="1" height="49" fill="#474747" />
<rect x="430.83" y="299" width="1" height="49" fill="#474747" />
<rect x="464.64" y="299" width="1" height="49" fill="#474747" />
<rect x="498.45" y="299" width="1" height="49" fill="#474747" />
<rect x="532.26" y="299" width="1" height="49" fill="#474747" />
<rect x="566.0699999999999" y="299" width="1" height="49" fill="#474747" />
<rect x="599.88" y="299" width="1" height="49" fill="#474747" />
<rect x="633.69" y="299" width="1" height="49" fill="#474747" />
<rect x="667.5" y="299" width="1" height="49" fill="#474747" />
<rect x="701.31" y="299" width="1" height="49" fill="#474747" />
<rect x="735.12" y="299" width="1" height="49" fill="#474747" />
<rect x="768.9300000000001" y="299" width="1" height="49" fill="#474747" />
<rect x="802.74" y="299" width="1" height="49" fill="#474747" />
<rect x="836.55" y="299" width="1" height="49" fill="#474747" />
<rect x="870.36" y="299" width="1" height="49" fill="#474747" />
<rect x="904.17" y="299" width="1" height="49" fill="#474747" />
<rect x="937.98" y="299" width="1" height="49" fill="#474747" />
<rect x="971.7900000000001" y="299" width="1" height="49" fill="#474747" />
<rect x="323" y="325.5" width="677" height="1" fill="#474747" />
<rect x="329.4" y="353" width="1" height="48" fill="#474747" />
<rect x="363.21" y="353" width="1" height="48" fill="#474747" />
<rect x="397.02" y="353" width="1" height="48" fill="#474747" />
<rect x="430.83" y="353" width="1" height="48" fill="#474747" />
<rect x="464.64" y="353" width="1" height="48" fill="#474747" />
<rect x="498.45" y="353" width="1" height="48" fill="#474747" />
<rect x="532.26" y="353" width="1" height="48" fill="#474747" />
<rect x="566.0699999999999" y="353" width="1" height="48" fill="#474747" />
<rect x="599.88" y="353" width="1" height="48" fill="#474747" />
<rect x="633.69" y="353" width="1" height="48" fill="#474747" />
<rect x="667.5" y="353" width="1" height="48" fill="#474747" />
<rect x="701.31" y="353" width="1" height="48" fill="#474747" />
<rect x="735.12" y="353" width="1" height="48" fill="#474747" />
<rect x="768.9300000000001" y="353" width="1" height="48" fill="#474747" />
<rect x="802.74" y="353" width="1" height="48" fill="#474747" />
<rect x="836.55" y="353" width="1" height="48" fill="#474747" />
<rect x="870.36" y="353" width="1" height="48" fill="#474747" />
<rect x="904.17" y="353" width="1" height="48" fill="#474747" />
<rect x="937.98" y="353" width="1" height="48" fill="#474747" />
<rect x="971.7900000000001" y="353" width="1" height="48" fill="#474747" />
<rect x="323" y="362.0" width="677" height="1" fill="#474747" />
<rect x="323" y="385.5" width="677" height="1" fill="#474747" />
<rect x="329.4" y="406" width="1" height="49" fill="#474747" />
<rect x="363.21" y="406" width="1" height="49" fill="#474747" />
<rect x="397.02" y="406" width="1" height="49" fill="#474747" />
<rect x="430.83" y="406" width="1" height="49" fill="#474747" />
<rect x="464.64" y="406" width="1" height="49" fill="#474747" />
<rect x="498.45" y="406" width="1" height="49" fill="#474747" />
<rect x="532.26" y="406" width="1" height="49" fill="#474747" />
<rect x="566.0699999999999" y="406" width="1" height="49" fill="#474747" />
<rect x="599.88" y="406" width="1" height="49" fill="#474747" />
<rect x="633.69" y="406" width="1" height="49" fill="#474747" />
<rect x="667.5" y="406" width="1" height="49" fill="#474747" />
<rect x="701.31" y="406" width="1" height="49" fill="#474747" />
<rect x="735.12" y="406" width="1" height="49" fill="#474747" />
<rect x="768.9300000000001" y="406" width="1" height="49" fill="#474747" />
<rect x="802.74" y="406" width="1" height="49" fill="#474747" />
<rect x="836.55" y="406" width="1" height="49" fill="#474747" />
<rect x="870.36" y="406" width="1" height="49" fill="#474747" />
<rect x="904.17" y="406" width="1" height="49" fill="#474747" />
<rect x="937.98" y="406" width="1" height="49" fill="#474747" />
<rect x="971.7900000000001" y="406" width="1" height="49" fill="#474747" />
<rect x="323" y="418.0" width="677" height="1" fill="#474747" />
<rect x="323" y="441.5" width="677" height="1" fill="#474747" />
<rect x="329.4" y="459.5" width="1" height="48.5" fill="#474747" />
<rect x="363.21" y="459.5" width="1" height="48.5" fill="#474747" />
<rect x="397.02" y="459.5" width="1" height="48.5" fill="#474747" />
<rect x="430.83" y="459.5" width="1" height="48.5" fill="#474747" />
<rect x="464.64" y="459.5" width="1" height="48.5" fill="#474747" />
<rect x="498.45" y="459.5" width="1" height="48.5" fill="#474747" />
<rect x="532.26" y="459.5" width="1" height="48.5" fill="#474747" />
<rect x="566.0699999999999" y="459.5" width="1" height="48.5" fill="#474747" />
<rect x="599.88" y="459.5" width="1" height="48.5" fill="#474747" />
<rect x="633.69" y="459.5" width="1" height="48.5" fill="#474747" />
<rect x="667.5" y="459.5" width="1" height="48.5" fill="#474747" />
<rect x="701.31" y="459.5" width="1" height="48.5" fill="#474747" />
<rect x="735.12" y="459.5" width="1" height="48.5" fill="#474747" />
<rect x="768.9300000000001" y="459.5" width="1" height="48.5" fill="#474747" />
<rect x="802.74" y="459.5" width="1" height="48.5" fill="#474747" />
<rect x="836.55" y="459.5" width="1" height="48.5" fill="#474747" />
<rect x="870.36" y="459.5" width="1" height="48.5" fill="#474747" />
<rect x="904.17" y="459.5" width="1" height="48.5" fill="#474747" />
<rect x="937.98" y="459.5" width="1" height="48.5" fill="#474747" />
<rect x="971.7900000000001" y="459.5" width="1" height="48.5" fill="#474747" />
<rect x="323" y="471.2" width="677" height="1" fill="#474747" />
<rect x="323" y="486.0" width="677" height="1" fill="#474747" />
<rect x="323" y="500.7" width="677" height="1" fill="#474747" />
<rect x="329.4" y="513" width="1" height="48" fill="#474747" />
<rect x="363.21" y="513" width="1" height="48" fill="#474747" />
<rect x="397.02" y="513" width="1" height="48" fill="#474747" />
<rect x="430.83" y="513" width="1" height="48" fill="#474747" />
<rect x="464.64" y="513" width="1" height="48" fill="#474747" />
<rect x="498.45" y="513" width="1" height="48" fill="#474747" />
<rect x="532.26" y="513" width="1" height="48" fill="#474747" />
<rect x="566.0699999999999" y="513" width="1" height="48" fill="#474747" />
<rect x="599.88" y="513" width="1" height="48" fill="#474747" />
<rect x="633.69" y="513" width="1" height="48" fill="#474747" />
<rect x="667.5" y="513" width="1" height="48" fill="#474747" />
<rect x="701.31" y="513" width="1" height="48" fill="#474747" />
<rect x="735.12" y="513" width="1" height="48" fill="#474747" />
<rect x="768.9300000000001" y="513" width="1" height="48" fill="#474747" />
<rect x="802.74" y="513" width="1" height="48" fill="#474747" />
<rect x="836.55" y="513" width="1" height="48" fill="#474747" />
<rect x="870.36" y="513" width="1" height="48" fill="#474747" />
<rect x="904.17" y="513" width="1" height="48" fill="#474747" />
<rect x="937.98" y="513" width="1" height="48" fill="#474747" />
<rect x="971.7900000000001" y="513" width="1" height="48" fill="#474747" />
<rect x="323" y="515.6" width="677" height="1" fill="#474747" />
<rect x="323" y="530.5" width="677" height="1" fill="#474747" />
<rect x="323" y="545.3" width="677" height="1" fill="#474747" />
<rect x="716.6" y="68" width="1" height="120" fill="#c8c850" />
<rect x="716.6" y="193" width="1" height="48" fill="#c8c850" />
<rect x="716.6" y="246" width="1" height="48" fill="#c8c850" />
<rect x="716.6" y="299" width="1" height="49" fill="#c8c850" />
<rect x="716.6" y="353" width="1" height="48" fill="#c8c850" />
<rect x="716.6" y="406" width="1" height="49" fill="#c8c850" />
<rect x="716.6" y="459.5" width="1" height="48.5" fill="#c8c850" />
<rect x="716.6" y="513" width="1" height="48" fill="#c8c850" />
<rect x="626.5" y="189.8" width="68" height="1.4" fill="#d4d4d4" />
<rect x="626.5" y="242.8" width="68" height="1.4" fill="#d4d4d4" />
<rect x="626.5" y="295.8" width="68" height="1.4" fill="#d4d4d4" />
<rect x="626.5" y="349.8" width="68" height="1.4" fill="#d4d4d4" />
<rect x="626.5" y="402.8" width="68" height="1.4" fill="#d4d4d4" />
<rect x="626.5" y="456.55" width="68" height="1.4" fill="#d4d4d4" />
<rect x="626.5" y="509.8" width="68" height="1.4" fill="#d4d4d4" />
<rect x="626.5" y="562.5" width="68" height="1.4" fill="#d4d4d4" />
<defs><clipPath id="cp0"><rect x="323" y="68" width="677" height="120"/></clipPath><clipPath id="cp1"><rect x="323" y="193" width="677" height="48"/></clipPath><clipPath id="cp2"><rect x="323" y="246" width="677" height="48"/></clipPath><clipPath id="cp3"><rect x="323" y="299" width="677" height="49"/></clipPath><clipPath id="cp4"><rect x="323" y="353" width="677" height="48"/></clipPath><clipPath id="cp5"><rect x="323" y="406" width="677" height="49"/></clipPath><clipPath id="cp6"><rect x="323" y="459.5" width="677" height="48.5"/></clipPath><clipPath id="cp7"><rect x="323" y="513" width="677" height="48"/></clipPath></defs>
<path d="M323.0,146.8 C324.3,145.4 327.4,140.8 329.3,139.6 C331.2,138.4 330.7,139.2 332.4,140.6 C334.1,142.0 335.5,145.8 337.6,146.8 C339.7,147.8 340.1,142.7 342.8,145.8 C345.5,148.9 348.4,159.9 351.1,162.4 C353.8,164.9 353.5,163.8 356.2,158.2 C358.9,152.6 361.8,136.3 364.5,134.4 C367.2,132.5 367.6,141.9 369.7,148.9 C371.8,155.9 372.8,167.9 374.9,169.6 C377.0,171.3 378.7,160.1 380.1,157.2 C381.5,154.3 380.7,158.4 382.1,155.1 C383.5,151.8 385.6,143.2 387.3,140.6 C389.0,138.0 388.5,137.1 390.4,142.3 C392.3,147.5 394.9,161.8 396.6,166.5 C398.3,171.2 397.5,169.0 398.7,165.9 C399.9,162.8 400.5,155.8 402.8,151.0 C405.1,146.2 407.6,146.5 410.1,141.7 C412.6,136.9 413.0,128.9 415.3,127.2 C417.6,125.5 419.0,133.4 421.5,133.4 C424.0,133.4 425.6,127.4 427.7,127.2 C429.8,127.0 429.7,132.6 431.8,132.4 C433.9,132.2 435.6,124.2 438.1,126.1 C440.6,128.0 442.2,138.0 444.3,141.7 C446.4,145.4 446.0,146.5 448.4,144.4 C450.8,142.3 453.4,131.3 456.3,131.3 C459.2,131.3 459.9,144.0 462.9,144.4 C465.9,144.8 468.7,137.4 471.2,133.4 C473.7,129.4 473.9,125.5 475.3,124.5 C476.7,123.5 476.7,122.1 478.4,128.2 C480.1,134.3 481.1,150.8 483.6,155.1 C486.1,159.4 488.2,148.9 490.9,149.5 C493.6,150.1 494.8,158.5 497.2,158.2 C499.6,157.9 500.3,147.7 502.8,147.9 C505.3,148.1 506.9,161.6 509.7,159.3 C512.5,157.0 514.6,139.8 516.9,136.5 C519.2,133.2 519.2,138.1 521.1,142.7 C523.0,147.3 524.5,157.1 526.2,159.3 C527.9,161.5 528.4,154.5 529.4,153.5 C530.4,152.5 530.1,152.5 531.4,154.1 C532.7,155.7 533.3,162.8 536.0,161.3 C538.7,159.8 542.1,149.7 544.9,146.8 C547.7,143.9 548.0,146.9 550.1,146.8 C552.2,146.7 553.1,147.3 555.2,146.4 C557.3,145.5 558.7,141.8 560.4,142.3 C562.1,142.8 561.6,145.0 563.5,148.9 C565.4,152.8 567.4,161.1 569.7,162.0 C572.0,162.9 572.8,154.5 574.9,153.5 C577.0,152.5 577.6,157.2 580.1,156.8 C582.6,156.4 584.6,151.3 587.3,151.4 C590.0,151.5 590.8,152.4 593.6,157.2 C596.4,162.0 598.1,181.2 601.4,175.4 C604.7,169.6 607.3,135.6 610.1,128.2 C612.9,120.8 612.8,133.6 615.3,138.6 C617.8,143.6 620.3,151.0 622.6,153.1 C624.9,155.2 624.2,154.7 626.7,148.9 C629.2,143.1 632.1,129.3 635.0,124.1 C637.9,118.9 638.7,123.0 641.2,123.0 C643.7,123.0 644.9,125.1 647.4,124.1 C649.9,123.1 650.7,123.3 653.6,117.9 C656.5,112.5 659.4,102.5 661.9,97.1 C664.4,91.7 664.3,90.9 666.2,90.9 C668.1,90.9 669.7,95.0 671.4,97.1 C673.1,99.2 672.2,96.3 674.5,101.3 C676.8,106.3 679.7,114.1 682.8,122.0 C685.9,129.9 687.7,136.5 690.0,140.6 C692.3,144.7 692.5,143.5 694.2,142.7 C695.9,141.9 696.4,141.1 698.3,136.5 C700.2,131.9 701.2,126.9 703.5,119.9 C705.8,112.9 707.4,109.0 709.7,101.3 C712.0,93.6 713.2,86.2 714.9,81.6 C716.6,77.0 716.6,77.5 718.0,78.5 C719.4,79.5 720.2,80.0 722.1,86.8 C724.0,93.6 725.2,106.3 727.3,112.7 C729.4,119.1 730.2,117.5 732.5,118.9 C734.8,120.3 736.4,116.4 738.7,119.5 C741.0,122.6 741.9,129.3 743.9,134.4 C745.9,139.5 746.7,146.5 748.6,144.8 C750.5,143.1 751.2,132.0 753.2,126.1 C755.2,120.2 756.3,115.4 758.4,115.4 C760.5,115.4 761.7,121.9 763.6,126.1 C765.5,130.3 765.0,136.9 767.7,136.5 C770.4,136.1 773.7,128.0 777.0,124.1 C780.3,120.2 781.8,115.1 784.3,116.8 C786.8,118.5 787.6,123.5 789.5,132.4 C791.4,141.3 792.2,155.1 793.6,161.3 C795.0,167.5 794.8,161.5 796.7,163.4 C798.6,165.3 800.7,166.0 802.9,170.7 C805.1,175.4 801.9,183.7 807.5,187.0 C813.1,190.3 825.2,189.2 830.9,187.0 C836.6,184.8 834.3,183.8 836.2,175.8 C838.1,167.8 838.8,156.9 840.4,146.8 C842.0,136.7 842.5,129.0 844.1,125.1 C845.7,121.2 846.2,128.9 848.6,127.2 C851.0,125.5 853.6,118.8 855.9,116.8 C858.2,114.8 858.1,112.6 860.0,117.4 C861.9,122.2 863.3,134.4 865.6,140.6 C867.9,146.8 869.3,146.4 871.4,148.5 C873.5,150.6 873.9,146.0 876.0,151.0 C878.1,156.0 880.0,169.5 881.8,173.4 C883.6,177.3 883.0,178.1 884.9,170.7 C886.8,163.3 889.2,141.5 891.1,136.5 C893.0,131.5 892.4,141.2 894.2,145.8 C896.0,150.4 898.1,158.2 900.0,159.7 C901.9,161.2 900.9,148.0 903.5,153.5 C906.1,159.0 904.5,180.3 912.8,187.0 C921.1,193.7 937.7,189.0 945.0,187.0 C952.3,185.0 947.2,181.4 949.1,176.9 C951.0,172.4 952.6,165.5 954.3,164.5 C956.0,163.5 955.3,167.2 957.4,171.7 C959.5,176.2 962.5,186.6 964.6,187.0 C966.7,187.4 966.0,180.7 967.7,173.8 C969.4,166.9 971.2,156.5 972.9,152.6 C974.6,148.7 973.9,157.3 976.0,154.1 C978.1,150.9 980.6,138.8 983.3,136.5 C986.0,134.2 987.2,137.1 989.5,142.7 C991.8,148.3 992.6,162.2 994.7,164.5 C996.8,166.8 998.8,156.2 999.8,154.1" fill="none" stroke="#33b533" stroke-width="1.15" stroke-linejoin="round" clip-path="url(#cp0)"/>
<path d="M323.0,213.7 C327.8,213.7 333.0,213.0 341.1,213.7 C349.2,214.4 346.4,215.8 353.4,216.4 C360.4,217.0 359.1,216.7 367.5,216.0 C375.9,215.3 374.2,214.3 385.0,213.7 C395.8,213.1 400.9,213.9 407.9,213.7 C414.9,213.5 405.8,212.2 411.4,212.9 C417.0,213.6 418.2,215.1 429.0,216.4 C439.8,217.7 442.0,217.1 451.8,217.6 C461.6,218.1 453.0,218.0 465.9,218.1 C478.8,218.2 489.0,218.2 500.0,217.8 C511.0,217.4 501.9,216.8 507.0,216.7 C512.1,216.6 509.9,215.8 519.3,217.6 C528.7,219.4 528.6,221.4 542.2,223.4 C555.8,225.4 557.2,225.6 570.3,225.2 C583.4,224.8 582.0,223.9 591.4,222.0 C600.8,220.1 597.1,219.6 605.5,218.1 C613.9,216.6 613.6,218.7 623.0,216.4 C632.4,214.1 632.1,212.2 640.6,209.3 C649.1,206.4 648.1,206.3 654.7,205.5 C661.3,204.7 658.3,205.9 665.2,206.2 C672.1,206.5 671.2,207.5 680.5,206.7 C689.8,205.9 690.5,204.6 699.9,203.2 C709.3,201.8 709.6,201.7 715.7,201.4 C721.8,201.1 715.2,200.5 722.7,202.0 C730.2,203.5 732.1,206.1 743.8,207.0 C755.5,207.9 758.2,205.8 766.7,205.5 C775.2,205.2 768.5,204.4 775.5,205.8 C782.5,207.2 782.7,210.3 793.0,210.7 C803.3,211.1 806.1,207.7 814.1,207.2 C822.1,206.7 816.8,207.0 822.9,209.0 C829.0,211.0 828.7,212.4 837.0,214.6 C845.3,216.8 846.3,215.5 854.1,217.2 C861.9,218.9 859.8,221.3 866.4,220.8 C873.0,220.3 871.2,218.2 878.7,215.5 C886.2,212.8 887.5,211.8 894.5,210.7 C901.5,209.6 898.0,211.5 905.0,211.4 C912.0,211.3 912.0,211.5 920.9,210.2 C929.8,208.9 931.4,207.4 938.4,206.7 C945.4,206.0 938.3,204.6 947.2,207.6 C956.1,210.6 961.5,213.3 971.8,218.1 C982.1,222.9 978.4,223.5 985.9,225.7 C993.4,227.9 996.2,226.2 1000.0,226.4" fill="none" stroke="#c8c8c8" stroke-width="1.2" stroke-linejoin="round" clip-path="url(#cp1)"/>
<path d="M323.0,213.7 C327.2,213.7 334.0,213.1 341.1,213.7 C348.2,214.3 347.2,215.9 353.4,216.4 C359.6,216.9 360.1,216.6 367.5,216.0 C374.9,215.4 375.6,214.2 385.0,213.7 C394.4,213.2 401.7,213.9 407.9,213.7 C414.1,213.5 406.5,212.3 411.4,212.9 C416.3,213.5 419.6,215.3 429.0,216.4 C438.4,217.5 443.2,217.2 451.8,217.6 C460.4,218.0 454.7,218.1 465.9,218.1 C477.1,218.1 490.4,218.1 500.0,217.8 C509.6,217.5 502.5,216.7 507.0,216.7 C511.5,216.7 511.1,216.0 519.3,217.6 C527.5,219.2 530.3,221.6 542.2,223.4 C554.1,225.2 558.8,225.5 570.3,225.2 C581.8,224.9 583.2,223.7 591.4,222.0 C599.6,220.3 598.1,219.4 605.5,218.1 C612.9,216.8 614.8,218.5 623.0,216.4 C631.2,214.3 633.2,211.8 640.6,209.3 C648.0,206.8 649.0,206.2 654.7,205.5 C660.4,204.8 659.2,205.9 665.2,206.2 C671.2,206.5 672.4,207.4 680.5,206.7 C688.6,206.0 691.7,204.4 699.9,203.2 C708.1,202.0 710.4,201.7 715.7,201.4 C721.0,201.1 716.1,200.7 722.7,202.0 C729.3,203.3 733.5,206.2 743.8,207.0 C754.1,207.8 759.3,205.8 766.7,205.5 C774.1,205.2 769.4,204.6 775.5,205.8 C781.6,207.0 784.0,210.4 793.0,210.7 C802.0,211.0 807.1,207.6 814.1,207.2 C821.1,206.8 817.6,207.3 822.9,209.0 C828.2,210.7 829.7,212.7 837.0,214.6 C844.3,216.5 847.2,215.8 854.1,217.2 C861.0,218.6 860.7,221.2 866.4,220.8 C872.1,220.4 872.1,217.9 878.7,215.5 C885.3,213.1 888.4,211.7 894.5,210.7 C900.6,209.7 898.8,211.5 905.0,211.4 C911.2,211.3 913.1,211.3 920.9,210.2 C928.7,209.1 932.3,207.3 938.4,206.7 C944.5,206.1 939.4,204.9 947.2,207.6 C955.0,210.3 962.8,213.9 971.8,218.1 C980.8,222.3 979.3,223.8 985.9,225.7 C992.5,227.6 996.7,226.2 1000.0,226.4 L1000.0,226.4 C997.5,226.1 993.1,226.9 989.4,225.2 C985.7,223.5 987.0,221.1 984.1,219.0 C981.2,216.9 980.4,218.2 977.1,216.4 C973.8,214.6 974.2,213.1 970.1,211.4 C966.0,209.7 963.2,210.8 959.5,209.3 C955.8,207.8 956.8,206.4 954.3,204.9 C951.8,203.4 952.7,202.7 949.0,202.7 C945.3,202.7 943.7,203.8 938.4,204.9 C933.1,206.0 930.6,205.3 926.1,207.2 C921.6,209.1 922.0,210.7 919.1,212.9 C916.2,215.1 917.1,217.0 913.8,216.7 C910.5,216.3 909.1,213.2 905.0,211.4 C900.9,209.6 903.2,207.0 896.2,209.0 C889.2,211.0 881.5,216.5 875.2,219.9 C868.9,223.3 871.9,223.6 869.0,223.4 C866.1,223.2 865.2,221.4 862.9,219.0 C860.6,216.6 861.4,213.3 859.3,212.9 C857.2,212.5 857.8,216.4 854.1,217.2 C850.4,218.0 846.9,215.8 843.5,216.4 C840.1,217.0 841.1,220.3 839.6,219.9 C838.1,219.5 841.7,217.7 837.0,214.6 C832.3,211.5 825.1,209.1 819.4,206.7 C813.7,204.2 818.1,202.7 812.4,204.1 C806.7,205.5 799.7,211.4 794.8,212.5 C789.9,213.6 793.4,211.0 791.3,209.0 C789.2,207.0 789.3,205.9 786.0,204.1 C782.7,202.3 782.1,201.6 777.2,201.4 C772.3,201.2 769.4,203.7 764.9,203.2 C760.4,202.7 762.4,198.4 757.9,199.1 C753.4,199.8 750.1,205.7 745.6,206.2 C741.1,206.7 743.1,203.1 738.6,201.4 C734.1,199.7 730.7,200.3 726.2,198.8 C721.7,197.3 723.7,194.7 719.2,194.9 C714.7,195.1 711.8,197.4 706.9,199.7 C702.0,202.0 702.2,203.1 698.1,204.9 C694.0,206.7 693.8,207.4 689.3,207.6 C684.8,207.8 683.3,207.5 678.8,205.8 C674.3,204.1 672.8,201.9 670.0,200.5 C667.2,199.1 669.8,200.0 667.0,199.7 C664.2,199.4 665.6,197.7 658.2,199.1 C650.8,200.5 644.3,202.3 635.3,205.5 C626.3,208.7 625.2,211.8 619.5,212.9 C613.8,214.0 614.0,209.0 610.7,210.2 C607.4,211.4 610.0,215.3 605.5,218.1 C601.0,220.9 597.6,221.2 591.4,222.0 C585.2,222.8 582.8,221.5 579.1,221.6 C575.4,221.7 577.2,220.8 575.6,222.5 C574.0,224.2 574.2,227.1 572.1,228.7 C570.0,230.3 569.7,230.1 566.8,229.5 C563.9,228.9 562.7,226.0 559.8,226.0 C556.9,226.0 559.4,228.9 554.5,229.5 C549.6,230.1 545.3,230.5 538.7,228.7 C532.1,226.9 530.9,224.2 526.4,221.6 C521.9,219.0 524.6,218.6 519.3,217.6 C514.0,216.6 508.0,216.3 503.5,217.2 C499.0,218.1 501.8,220.2 500.0,221.6 C498.2,223.0 498.0,223.5 495.8,223.4 C493.6,223.3 493.4,220.9 490.5,221.3 C487.6,221.7 486.4,225.3 483.5,225.2 C480.6,225.1 480.3,222.9 478.2,220.8 C476.1,218.7 477.5,217.0 474.7,216.4 C471.9,215.8 469.3,218.1 466.0,218.1 C462.7,218.1 462.7,217.0 460.6,216.4 C458.5,215.8 459.2,215.2 457.1,215.5 C455.0,215.8 458.8,217.8 451.8,217.6 C444.8,217.4 435.0,216.1 427.2,214.6 C419.4,213.1 422.1,212.4 418.4,211.1 C414.7,209.8 413.8,208.4 411.4,209.0 C408.9,209.6 411.2,211.1 407.9,213.7 C404.6,216.3 401.4,218.5 397.3,220.2 C393.2,221.9 394.0,220.1 390.3,220.8 C386.6,221.5 384.8,223.1 381.5,223.4 C378.2,223.7 378.9,222.2 376.2,222.0 C373.5,221.8 373.0,223.2 370.1,222.5 C367.2,221.8 367.0,219.2 363.9,219.0 C360.8,218.8 360.0,221.0 356.9,221.6 C353.8,222.2 354.1,222.0 350.8,221.6 C347.5,221.2 346.8,219.3 342.9,219.9 C339.0,220.5 338.7,223.7 334.1,224.3 C329.5,224.9 325.6,222.9 323.0,222.5 Z" fill="#1b84d8" clip-path="url(#cp1)"/>
<text x="325" y="200" font-family="Liberation Sans" font-size="7.6" font-weight="400" fill="#e8e8e8" text-anchor="start" textLength="35.5" lengthAdjust="spacingAndGlyphs" >Rueda libre</text>
<text x="363" y="200" font-family="Liberation Sans" font-size="7.6" font-weight="400" fill="#2a8ce0" text-anchor="start" textLength="20" lengthAdjust="spacingAndGlyphs" >Viento</text>
<path d="M323.0,253.9 C324.6,253.9 336.3,253.5 339.3,253.9 C342.3,254.3 350.6,257.5 353.4,257.9 C356.2,258.3 365.6,256.8 367.5,257.9 C369.4,259.0 371.0,267.4 371.9,268.5 C372.8,269.6 375.3,269.8 376.2,268.5 C377.1,267.2 379.3,256.8 380.6,255.3 C381.9,253.8 388.2,253.4 389.4,253.9 C390.5,254.4 391.6,258.9 392.1,260.6 C392.6,262.3 394.1,270.1 394.7,271.1 C395.3,272.1 397.3,271.9 398.2,270.2 C399.1,268.5 402.2,255.5 403.5,253.9 C404.8,252.3 408.8,253.9 411.4,254.4 C413.9,254.9 425.8,258.1 429.0,258.5 C432.2,258.9 440.2,258.6 443.0,258.8 C445.8,259.0 455.5,260.3 457.1,260.6 C458.7,260.9 458.0,262.2 458.9,262.0 C459.8,261.8 464.3,258.7 465.9,258.5 C467.5,258.3 472.8,260.2 474.7,260.2 C476.6,260.2 482.7,259.0 485.2,258.8 C487.7,258.6 498.2,258.0 500.0,257.9 C501.8,257.8 502.8,257.5 503.5,257.9 C504.2,258.3 506.2,261.1 507.0,261.5 C507.8,261.9 510.7,261.9 511.4,261.5 C512.1,261.1 513.5,257.8 514.1,257.4 C514.7,257.0 517.0,257.1 517.6,257.4 C518.2,257.7 519.2,260.6 520.2,260.2 C521.2,259.8 526.1,254.0 527.2,253.5 C528.3,253.0 529.9,255.2 530.8,255.3 C531.7,255.4 534.5,254.1 536.0,254.4 C537.5,254.7 543.3,257.2 545.7,257.9 C548.1,258.6 557.3,261.1 559.8,261.5 C562.3,261.9 568.7,262.2 570.3,262.0 C571.9,261.8 573.8,260.2 575.6,259.7 C577.4,259.2 586.1,257.7 587.9,257.1 C589.7,256.5 592.2,253.0 593.2,253.9 C594.2,254.8 597.6,263.4 598.4,265.9 C599.2,268.4 600.9,277.9 601.6,279.0 C602.3,280.1 604.8,278.6 605.5,277.3 C606.2,276.0 607.4,267.0 609.0,265.9 C610.6,264.8 618.8,266.4 621.3,265.9 C623.8,265.4 631.0,262.1 633.6,260.6 C636.2,259.2 645.4,252.5 647.7,251.4 C650.0,250.3 654.5,249.8 656.4,249.7 C658.3,249.6 664.9,250.7 667.0,250.9 C669.1,251.1 675.5,252.0 677.0,252.1 C678.5,252.2 680.7,251.8 682.3,251.4 C683.9,251.0 691.0,248.2 692.9,247.9 C694.8,247.6 700.2,248.1 701.6,247.9 C703.0,247.7 705.8,246.3 706.9,246.2 C708.0,246.1 711.1,246.9 712.2,246.9 C713.3,246.9 716.6,246.1 717.5,246.2 C718.4,246.3 720.4,247.9 721.0,247.9 C721.6,247.9 722.2,245.9 723.6,246.2 C725.0,246.5 733.3,250.4 735.0,250.9 C736.7,251.4 739.2,250.7 740.3,251.4 C741.4,252.1 744.6,256.4 745.6,257.9 C746.6,259.3 749.2,264.5 750.0,265.9 C750.8,267.3 753.0,272.2 754.0,271.5 C755.0,270.8 758.5,260.9 759.6,258.8 C760.7,256.7 763.8,251.3 764.9,250.4 C766.0,249.5 768.6,249.6 770.2,249.7 C771.8,249.8 779.1,251.3 780.7,251.8 C782.3,252.3 784.9,254.0 786.0,254.4 C787.1,254.8 790.2,255.2 791.3,256.2 C792.4,257.2 795.2,260.3 796.6,264.1 C798.0,267.9 801.8,291.0 805.3,294.0 C808.8,297.0 828.3,298.4 831.7,294.0 C835.1,289.6 838.2,254.2 839.6,250.0 C841.0,245.8 844.7,251.4 845.8,251.8 C846.9,252.2 849.3,253.4 850.5,253.9 C851.7,254.4 856.1,256.5 857.6,257.1 C859.1,257.7 863.8,260.3 865.5,260.2 C867.2,260.1 873.2,255.7 874.3,255.7 C875.4,255.7 876.3,258.6 876.9,260.6 C877.5,262.6 879.7,274.6 880.4,276.0 C881.1,277.4 883.0,277.0 883.9,274.6 C884.8,272.2 888.1,253.6 888.9,251.8 C889.7,250.1 891.3,255.7 891.9,257.1 C892.5,258.5 893.7,265.3 894.5,266.2 C895.3,267.1 898.9,266.8 899.8,266.2 C900.7,265.6 902.2,257.4 903.3,260.2 C904.3,263.0 906.0,290.6 910.3,294.0 C914.6,297.4 941.9,295.9 946.3,294.0 C950.7,292.1 953.1,274.6 954.6,274.6 C956.1,274.6 960.1,292.1 961.3,294.0 C962.5,295.9 965.1,298.5 966.2,294.0 C967.3,289.5 971.4,253.0 972.7,249.2 C974.0,245.4 977.8,254.5 978.9,255.7 C980.0,256.9 983.0,260.7 984.1,261.5 C985.2,262.3 989.1,264.3 990.3,264.1 C991.4,263.9 994.6,259.6 995.6,259.2 C996.6,258.8 999.6,260.5 1000.0,260.6" fill="none" stroke="#b4b43c" stroke-width="1.15" stroke-linejoin="round" clip-path="url(#cp2)"/>
<text x="325" y="254" font-family="Liberation Sans" font-size="7.6" font-weight="400" fill="#f07818" text-anchor="start" textLength="24" lengthAdjust="spacingAndGlyphs" >Arrastre</text>
<line x1="323.5" y1="255" x2="339.5" y2="255" stroke="#f07818" stroke-width="0.9" />
<path d="M323.0,309.3 C326.6,308.7 323.2,307.6 336.6,307.0 C350.0,306.4 362.5,306.7 373.1,307.0 C383.7,307.3 372.0,308.3 376.4,308.3 C380.8,308.3 384.4,306.9 389.7,307.0 C395.0,307.1 388.4,308.0 396.4,308.6 C404.4,309.2 407.2,309.7 419.6,309.3 C432.0,308.9 431.3,307.2 442.8,307.0 C454.3,306.8 453.0,308.6 462.8,308.6 C472.6,308.6 459.9,307.4 479.4,307.0 C498.9,306.6 518.1,306.6 535.8,307.0 C553.5,307.4 537.8,309.1 545.8,308.6 C553.8,308.1 558.6,305.7 565.7,305.3 C572.8,304.9 567.0,307.0 572.3,307.0 C577.6,307.0 577.6,305.3 585.6,305.3 C593.6,305.3 594.2,305.7 602.2,307.0 C610.2,308.3 609.3,309.2 615.5,310.3 C621.7,311.4 617.4,310.8 625.4,311.0 C633.4,311.2 638.3,310.7 645.4,311.0 C652.5,311.3 648.1,312.0 652.0,312.0 C655.9,312.0 647.8,311.3 660.0,311.0 C672.2,310.7 684.9,311.2 697.6,310.7 C710.3,310.2 699.6,309.9 707.8,309.0 C716.0,308.1 718.4,307.8 728.4,307.3 C738.4,306.8 736.3,307.0 745.4,307.3 C754.5,307.6 752.5,308.3 762.5,308.6 C772.5,308.9 773.9,308.9 783.0,308.6 C792.1,308.3 789.4,307.3 796.7,307.3 C804.0,307.3 803.1,307.2 810.4,308.6 C817.7,310.0 816.7,310.6 824.0,312.4 C831.3,314.2 830.4,315.5 837.7,315.5 C845.0,315.5 843.2,314.2 851.4,312.4 C859.6,310.6 861.2,310.0 868.5,308.6 C875.8,307.2 870.5,307.6 878.7,307.3 C886.9,307.0 889.2,306.7 899.2,307.3 C909.2,307.9 907.2,308.3 916.3,309.7 C925.4,311.1 925.2,310.3 933.4,312.4 C941.6,314.5 940.3,316.0 947.1,317.5 C953.9,319.0 953.1,317.1 959.0,318.2 C964.9,319.3 963.4,321.6 969.3,321.6 C975.2,321.6 975.4,320.5 981.3,318.2 C987.2,315.9 986.5,314.9 991.5,313.1 C996.5,311.3 997.7,311.9 1000.0,311.4" fill="none" stroke="#a020b0" stroke-width="1.3" stroke-linejoin="round" clip-path="url(#cp3)"/>
<rect x="323.3" y="373.0" width="43.19999999999999" height="1.3" fill="#40b8c8" />
<rect x="374.8" y="373.0" width="12.300000000000011" height="1.3" fill="#40b8c8" />
<rect x="397" y="373.0" width="58.5" height="1.3" fill="#40b8c8" />
<rect x="461.1" y="376.0" width="41.5" height="1.3" fill="#40b8c8" />
<rect x="508.2" y="375.0" width="9.300000000000011" height="1.3" fill="#40b8c8" />
<rect x="523.2" y="381.59999999999997" width="6.0" height="1.3" fill="#40b8c8" />
<rect x="532.5" y="384.59999999999997" width="59.700000000000045" height="1.3" fill="#40b8c8" />
<rect x="603.9" y="366.59999999999997" width="91.0" height="1.3" fill="#40b8c8" />
<rect x="703.7" y="366.5" width="2.7999999999999545" height="1.3" fill="#40b8c8" />
<rect x="716.4" y="366.09999999999997" width="22.899999999999977" height="1.3" fill="#40b8c8" />
<rect x="758.1" y="366.09999999999997" width="31.799999999999955" height="1.3" fill="#40b8c8" />
<rect x="835" y="377.4" width="38.60000000000002" height="1.3" fill="#40b8c8" />
<rect x="882.8" y="373.29999999999995" width="4.100000000000023" height="1.3" fill="#40b8c8" />
<rect x="968.3" y="384.59999999999997" width="21.5" height="1.3" fill="#40b8c8" />
<rect x="993.2" y="387.7" width="6.7999999999999545" height="1.3" fill="#40b8c8" />
<polygon points="323.0,427.6 365.0,427.8 370.0,428.1 530.5,427.6 557.1,426.9 588.9,427.1 614.3,427.6 627.0,428.9 662.5,430.4 693.0,432.2 728.5,434.0 741.2,434.0 746.3,435.0 760.0,435.0 764.9,434.3 784.4,435.2 799.1,436.7 833.2,436.0 862.5,436.4 877.2,437.2 904.0,437.9 930.9,438.9 967.5,439.1 1000.0,439.1 1000.0,455.0 323.0,455.0" fill="#804000" clip-path="url(#cp5)"/>
<rect x="371" y="428.095015576324" width="1.1999999999999886" height="26.904984423676012" fill="#ff8000" />
<rect x="393" y="428.02647975077883" width="1.1999999999999886" height="26.973520249221167" fill="#ff8000" />
<rect x="601" y="427.35" width="1.2000000000000455" height="27.649999999999977" fill="#ff8000" />
<rect x="799" y="436.61378299120236" width="8.600000000000023" height="18.386217008797644" fill="#ff8000" />
<rect x="808.1" y="436.41466275659826" width="9.799999999999955" height="18.58533724340174" fill="#ff8000" />
<rect x="817.9" y="436.2319648093842" width="8.0" height="18.76803519061582" fill="#e00000" />
<rect x="825.9" y="436.0944281524927" width="5.399999999999977" height="18.905571847507304" fill="#ff8000" />
<rect x="877.2" y="437.2313432835821" width="2.3999999999999773" height="17.768656716417922" fill="#ff8000" />
<rect x="893.5" y="437.63880597014924" width="1.0" height="17.361194029850765" fill="#ff8000" />
<rect x="905.3" y="438.1156133828996" width="9.0" height="16.884386617100404" fill="#ff8000" />
<rect x="914.5" y="438.5040892193308" width="11.5" height="16.495910780669192" fill="#ff8000" />
<rect x="927.2" y="438.901912568306" width="8.099999999999909" height="16.09808743169401" fill="#ff8000" />
<rect x="935.8" y="438.95683060109286" width="11.0" height="16.04316939890714" fill="#ff8000" />
<rect x="956.5" y="439.0445355191257" width="1.7000000000000455" height="15.955464480874298" fill="#ff8000" />
<rect x="958.2" y="439.0546448087432" width="2.0" height="15.945355191256795" fill="#e00000" />
<rect x="960.2" y="439.07213114754103" width="4.399999999999977" height="15.927868852458971" fill="#ff8000" />
<rect x="965.6" y="439.0934426229508" width="1.3999999999999773" height="15.906557377049182" fill="#ff8000" />
<rect x="323" y="453.3" width="677" height="1.7" fill="#c01010" />
<text x="325" y="413.5" font-family="Liberation Sans" font-size="7.6" font-weight="400" fill="#5a28ff" text-anchor="start" textLength="19" lengthAdjust="spacingAndGlyphs" >Altura</text>
<text x="345" y="413.5" font-family="Liberation Sans" font-size="7.6" font-weight="400" fill="#ff8a10" text-anchor="start" textLength="35.5" lengthAdjust="spacingAndGlyphs" >Rueda libre</text>
<text x="382" y="413.5" font-family="Liberation Sans" font-size="7.6" font-weight="400" fill="#e81010" text-anchor="start" textLength="27" lengthAdjust="spacingAndGlyphs" >Frenado</text>
<path d="M323,486.5 L323.0,488.5 C325.3,488.8 327.5,490.0 332.7,489.8 C337.9,489.6 340.7,488.5 345.4,487.7 C350.1,486.9 348.4,486.8 353.0,486.5 C357.6,486.2 360.8,485.9 365.0,486.5 C369.2,487.1 367.7,487.8 370.8,489.0 C373.9,490.2 374.9,491.0 378.4,491.6 C381.9,492.2 381.8,492.1 386.0,491.6 C390.2,491.1 387.9,490.1 396.2,489.5 C404.5,488.9 413.9,489.7 421.6,489.0 C429.3,488.3 424.5,487.4 429.2,486.5 C433.9,485.6 434.2,485.3 441.9,485.2 C449.6,485.1 454.9,486.4 462.0,486.0 C469.1,485.6 468.8,484.0 472.4,483.4 C476.0,482.8 474.5,482.7 477.4,483.4 C480.3,484.1 480.2,485.3 485.0,486.5 C489.8,487.7 491.9,487.6 497.8,488.5 C503.7,489.4 505.7,490.8 510.4,490.3 C515.1,489.8 515.7,487.8 518.1,486.5 C520.5,485.2 517.6,485.9 520.6,484.7 C523.6,483.5 525.5,482.6 530.8,481.4 C536.1,480.2 537.6,480.6 543.5,479.4 C549.4,478.2 551.5,476.6 556.2,476.3 C560.9,476.0 560.3,476.6 563.8,478.3 C567.3,480.0 567.6,482.0 571.4,483.4 C575.2,484.8 576.2,484.0 580.0,484.4 C583.8,484.8 584.1,483.5 587.6,485.2 C591.1,486.9 591.0,488.6 595.2,491.6 C599.4,494.6 600.1,497.9 605.4,497.9 C610.7,497.9 613.4,491.9 618.1,491.6 C622.8,491.3 621.5,493.1 625.7,496.6 C629.9,500.1 630.0,504.4 635.9,506.8 C641.8,509.2 644.6,508.3 651.1,506.8 C657.6,505.3 658.5,502.6 663.8,500.4 C669.1,498.2 667.5,496.2 674.0,497.4 C680.5,498.6 685.2,503.4 691.7,505.5 C698.2,507.6 697.2,505.7 701.9,506.3 C706.6,506.9 707.8,507.9 712.0,508.0 C716.2,508.1 714.9,509.2 719.7,506.8 C724.5,504.4 728.0,500.3 732.4,497.9 C736.8,495.5 735.2,495.2 738.7,496.6 C742.2,498.0 742.0,501.6 747.6,503.7 C753.2,505.8 756.9,505.7 762.8,505.5 C768.7,505.3 767.1,506.0 773.0,503.0 C778.9,500.0 782.3,493.7 788.2,492.8 C794.1,491.9 793.7,495.9 798.4,499.2 C803.1,502.5 804.0,505.3 808.2,506.9 C812.4,508.5 812.6,509.2 816.4,506.2 C820.2,503.2 820.5,498.5 824.6,493.9 C828.7,489.3 830.9,488.8 833.8,486.4 C836.7,484.0 833.8,484.8 836.9,483.7 C840.0,482.6 843.4,481.8 847.2,481.6 C851.0,481.4 850.4,483.4 853.3,482.7 C856.2,482.0 855.7,477.7 859.5,478.6 C863.3,479.5 865.4,482.3 869.7,486.4 C874.0,490.5 873.6,491.7 877.9,496.0 C882.2,500.3 882.9,504.2 888.2,504.8 C893.5,505.4 895.7,500.4 900.5,498.7 C905.3,497.0 903.9,496.8 908.7,497.6 C913.5,498.4 915.7,499.9 921.0,502.1 C926.3,504.3 926.5,506.2 931.3,506.9 C936.1,507.6 936.7,507.5 941.5,505.2 C946.3,502.9 947.0,501.4 951.8,497.0 C956.6,492.6 957.7,488.8 962.0,486.4 C966.3,484.0 967.8,486.3 970.2,486.8 C972.6,487.3 970.9,488.5 972.3,488.4 C973.7,488.3 974.5,488.8 976.4,486.4 C978.3,484.0 978.6,480.5 980.5,478.1 C982.4,475.7 982.2,476.3 984.6,476.1 C987.0,475.9 988.1,475.8 990.7,477.1 C993.3,478.4 993.7,480.9 995.9,481.6 C998.1,482.3 999.0,480.5 1000.0,480.2 L1000,486.5 Z" fill="#ff0000" clip-path="url(#cp6)"/>
<rect x="323" y="485.9" width="677" height="1.3" fill="#ff0000" />
<text x="325" y="520.5" font-family="Liberation Sans" font-size="7.6" font-weight="400" fill="#e0e0e0" text-anchor="start" textLength="52.5" lengthAdjust="spacingAndGlyphs" >Watios gastados</text>
<rect x="319" y="67.5" width="3.5" height="1" fill="#555" />
<text x="318" y="70.8" font-family="Liberation Sans" font-size="7.6" font-weight="400" fill="#151515" text-anchor="end" textLength="10.649999999999999" lengthAdjust="spacingAndGlyphs" >700</text>
<rect x="319" y="84.5" width="3.5" height="1" fill="#555" />
<text x="318" y="87.8" font-family="Liberation Sans" font-size="7.6" font-weight="400" fill="#151515" text-anchor="end" textLength="10.649999999999999" lengthAdjust="spacingAndGlyphs" >600</text>
<rect x="319" y="101.5" width="3.5" height="1" fill="#555" />
<text x="318" y="104.8" font-family="Liberation Sans" font-size="7.6" font-weight="400" fill="#151515" text-anchor="end" textLength="10.649999999999999" lengthAdjust="spacingAndGlyphs" >500</text>
<rect x="319" y="118.5" width="3.5" height="1" fill="#555" />
<text x="318" y="121.8" font-family="Liberation Sans" font-size="7.6" font-weight="400" fill="#151515" text-anchor="end" textLength="10.649999999999999" lengthAdjust="spacingAndGlyphs" >400</text>
<rect x="319" y="135.5" width="3.5" height="1" fill="#555" />
<text x="318" y="138.8" font-family="Liberation Sans" font-size="7.6" font-weight="400" fill="#151515" text-anchor="end" textLength="10.649999999999999" lengthAdjust="spacingAndGlyphs" >300</text>
<rect x="319" y="152.5" width="3.5" height="1" fill="#555" />
<text x="318" y="155.8" font-family="Liberation Sans" font-size="7.6" font-weight="400" fill="#151515" text-anchor="end" textLength="10.649999999999999" lengthAdjust="spacingAndGlyphs" >200</text>
<rect x="319" y="169.5" width="3.5" height="1" fill="#555" />
<text x="318" y="172.8" font-family="Liberation Sans" font-size="7.6" font-weight="400" fill="#151515" text-anchor="end" textLength="10.649999999999999" lengthAdjust="spacingAndGlyphs" >100</text>
<rect x="319" y="186.5" width="3.5" height="1" fill="#555" />
<text x="318" y="189.8" font-family="Liberation Sans" font-size="7.6" font-weight="400" fill="#151515" text-anchor="end" textLength="3.55" lengthAdjust="spacingAndGlyphs" >0</text>
<rect x="319" y="192.5" width="3.5" height="1" fill="#555" />
<text x="318" y="195.8" font-family="Liberation Sans" font-size="7.6" font-weight="400" fill="#151515" text-anchor="end" textLength="7.1" lengthAdjust="spacingAndGlyphs" >80</text>
<rect x="319" y="210.5" width="3.5" height="1" fill="#555" />
<text x="318" y="213.8" font-family="Liberation Sans" font-size="7.6" font-weight="400" fill="#151515" text-anchor="end" textLength="7.1" lengthAdjust="spacingAndGlyphs" >50</text>
<rect x="319" y="225.3" width="3.5" height="1" fill="#555" />
<text x="318" y="228.60000000000002" font-family="Liberation Sans" font-size="7.6" font-weight="400" fill="#151515" text-anchor="end" textLength="7.1" lengthAdjust="spacingAndGlyphs" >25</text>
<rect x="319" y="240.0" width="3.5" height="1" fill="#555" />
<text x="318" y="243.3" font-family="Liberation Sans" font-size="7.6" font-weight="400" fill="#151515" text-anchor="end" textLength="3.55" lengthAdjust="spacingAndGlyphs" >0</text>
<rect x="319" y="245.8" width="3.5" height="1" fill="#555" />
<text x="318" y="249.10000000000002" font-family="Liberation Sans" font-size="7.6" font-weight="400" fill="#151515" text-anchor="end" textLength="10.649999999999999" lengthAdjust="spacingAndGlyphs" >110</text>
<rect x="319" y="274.3" width="3.5" height="1" fill="#555" />
<text x="318" y="277.6" font-family="Liberation Sans" font-size="7.6" font-weight="400" fill="#151515" text-anchor="end" textLength="7.1" lengthAdjust="spacingAndGlyphs" >50</text>
<rect x="319" y="293.5" width="3.5" height="1" fill="#555" />
<text x="318" y="296.8" font-family="Liberation Sans" font-size="7.6" font-weight="400" fill="#151515" text-anchor="end" textLength="7.1" lengthAdjust="spacingAndGlyphs" >10</text>
<rect x="319" y="251.3" width="3.5" height="1" fill="#555" />
<rect x="319" y="298.8" width="3.5" height="1" fill="#555" />
<text x="318" y="302.1" font-family="Liberation Sans" font-size="7.6" font-weight="400" fill="#151515" text-anchor="end" textLength="10.649999999999999" lengthAdjust="spacingAndGlyphs" >150</text>
<rect x="319" y="325.4" width="3.5" height="1" fill="#555" />
<text x="318" y="328.7" font-family="Liberation Sans" font-size="7.6" font-weight="400" fill="#151515" text-anchor="end" textLength="10.649999999999999" lengthAdjust="spacingAndGlyphs" >100</text>
<rect x="319" y="346.7" width="3.5" height="1" fill="#555" />
<text x="318" y="350.0" font-family="Liberation Sans" font-size="7.6" font-weight="400" fill="#151515" text-anchor="end" textLength="7.1" lengthAdjust="spacingAndGlyphs" >60</text>
<rect x="319" y="352.5" width="3.5" height="1" fill="#555" />
<text x="318" y="355.8" font-family="Liberation Sans" font-size="7.6" font-weight="400" fill="#151515" text-anchor="end" textLength="3.55" lengthAdjust="spacingAndGlyphs" >6</text>
<rect x="319" y="361.6" width="3.5" height="1" fill="#555" />
<text x="318" y="364.90000000000003" font-family="Liberation Sans" font-size="7.6" font-weight="400" fill="#151515" text-anchor="end" textLength="3.55" lengthAdjust="spacingAndGlyphs" >5</text>
<rect x="319" y="385.4" width="3.5" height="1" fill="#555" />
<text x="318" y="388.7" font-family="Liberation Sans" font-size="7.6" font-weight="400" fill="#151515" text-anchor="end" textLength="8.7" lengthAdjust="spacingAndGlyphs" >2,5</text>
<rect x="319" y="400.0" width="3.5" height="1" fill="#555" />
<text x="318" y="403.3" font-family="Liberation Sans" font-size="7.6" font-weight="400" fill="#151515" text-anchor="end" textLength="3.55" lengthAdjust="spacingAndGlyphs" >1</text>
<rect x="319" y="405.7" width="3.5" height="1" fill="#555" />
<text x="318" y="409.0" font-family="Liberation Sans" font-size="7.6" font-weight="400" fill="#151515" text-anchor="end" textLength="10.649999999999999" lengthAdjust="spacingAndGlyphs" >300</text>
<rect x="319" y="417.9" width="3.5" height="1" fill="#555" />
<text x="318" y="421.2" font-family="Liberation Sans" font-size="7.6" font-weight="400" fill="#151515" text-anchor="end" textLength="10.649999999999999" lengthAdjust="spacingAndGlyphs" >200</text>
<rect x="319" y="441.2" width="3.5" height="1" fill="#555" />
<text x="318" y="444.5" font-family="Liberation Sans" font-size="7.6" font-weight="400" fill="#151515" text-anchor="end" textLength="3.55" lengthAdjust="spacingAndGlyphs" >0</text>
<rect x="319" y="453.4" width="3.5" height="1" fill="#555" />
<text x="318" y="456.7" font-family="Liberation Sans" font-size="7.6" font-weight="400" fill="#151515" text-anchor="end" textLength="14.6" lengthAdjust="spacingAndGlyphs" >-100</text>
<rect x="319" y="459.5" width="3.5" height="1" fill="#555" />
<text x="318" y="462.8" font-family="Liberation Sans" font-size="7.6" font-weight="400" fill="#151515" text-anchor="end" textLength="3.55" lengthAdjust="spacingAndGlyphs" >8</text>
<rect x="319" y="471.2" width="3.5" height="1" fill="#555" />
<text x="318" y="474.5" font-family="Liberation Sans" font-size="7.6" font-weight="400" fill="#151515" text-anchor="end" textLength="3.55" lengthAdjust="spacingAndGlyphs" >5</text>
<rect x="319" y="486.1" width="3.5" height="1" fill="#555" />
<text x="318" y="489.40000000000003" font-family="Liberation Sans" font-size="7.6" font-weight="400" fill="#151515" text-anchor="end" textLength="3.55" lengthAdjust="spacingAndGlyphs" >0</text>
<rect x="319" y="499.9" width="3.5" height="1" fill="#555" />
<text x="318" y="503.2" font-family="Liberation Sans" font-size="7.6" font-weight="400" fill="#151515" text-anchor="end" textLength="7.5" lengthAdjust="spacingAndGlyphs" >-5</text>
<rect x="319" y="506.5" width="3.5" height="1" fill="#555" />
<text x="318" y="509.8" font-family="Liberation Sans" font-size="7.6" font-weight="400" fill="#151515" text-anchor="end" textLength="7.5" lengthAdjust="spacingAndGlyphs" >-8</text>
<rect x="319" y="512.3" width="3.5" height="1" fill="#555" />
<text x="318" y="515.5999999999999" font-family="Liberation Sans" font-size="7.6" font-weight="400" fill="#151515" text-anchor="end" textLength="7.1" lengthAdjust="spacingAndGlyphs" >80</text>
<rect x="319" y="530.5" width="3.5" height="1" fill="#555" />
<text x="318" y="533.8" font-family="Liberation Sans" font-size="7.6" font-weight="400" fill="#151515" text-anchor="end" textLength="7.1" lengthAdjust="spacingAndGlyphs" >50</text>
<rect x="319" y="545.3" width="3.5" height="1" fill="#555" />
<text x="318" y="548.5999999999999" font-family="Liberation Sans" font-size="7.6" font-weight="400" fill="#151515" text-anchor="end" textLength="7.1" lengthAdjust="spacingAndGlyphs" >25</text>
<rect x="319" y="560.2" width="3.5" height="1" fill="#555" />
<text x="318" y="563.5" font-family="Liberation Sans" font-size="7.6" font-weight="400" fill="#151515" text-anchor="end" textLength="3.55" lengthAdjust="spacingAndGlyphs" >0</text>
<text transform="translate(303.5,127.8) rotate(-90)" font-family="Liberation Sans" font-size="8.2" fill="#222" text-anchor="middle" textLength="31.6" lengthAdjust="spacingAndGlyphs">Poten (W)</text>
<text transform="translate(306,216.7) rotate(-90)" font-family="Liberation Sans" font-size="8.2" fill="#222" text-anchor="middle" textLength="42.5" lengthAdjust="spacingAndGlyphs">Veloc (km/h)</text>
<text transform="translate(303.5,269.6) rotate(-90)" font-family="Liberation Sans" font-size="8.2" fill="#222" text-anchor="middle" textLength="34" lengthAdjust="spacingAndGlyphs">Cad (rpm)</text>
<text transform="translate(303.5,323.4) rotate(-90)" font-family="Liberation Sans" font-size="8.2" fill="#222" text-anchor="middle" textLength="32" lengthAdjust="spacingAndGlyphs">HR (bpm)</text>
<text transform="translate(303.5,376.7) rotate(-90)" font-family="Liberation Sans" font-size="8.2" fill="#222" text-anchor="middle" textLength="32" lengthAdjust="spacingAndGlyphs">Desarrollo</text>
<text transform="translate(303.5,430.5) rotate(-90)" font-family="Liberation Sans" font-size="8.2" fill="#222" text-anchor="middle" textLength="32" lengthAdjust="spacingAndGlyphs">Elvaci (m)</text>
<text transform="translate(303.5,483.4) rotate(-90)" font-family="Liberation Sans" font-size="8.2" fill="#222" text-anchor="middle" textLength="34.8" lengthAdjust="spacingAndGlyphs">Pendie (%)</text>
<text transform="translate(305,537) rotate(-90)" font-family="Liberation Sans" font-size="8.2" fill="#222" text-anchor="middle" textLength="34" lengthAdjust="spacingAndGlyphs">Pérdid (W)</text>
<rect x="1004.5" y="62" width="9.5" height="499" fill="#b4b4b4" />
<rect x="1004.5" y="62" width="9.5" height="9.5" fill="#d6d6d6" stroke="#a8a8a8" stroke-width="0.8" />
<path d="M1007,69 L1009.25,65.5 L1011.5,69 Z" fill="#555"/>
<rect x="1004.5" y="556.5" width="9.5" height="9.5" fill="#d6d6d6" stroke="#a8a8a8" stroke-width="0.8" />
<path d="M1007,559.5 L1009.25,563 L1011.5,559.5 Z" fill="#555"/>
<rect x="996.5" y="556.5" width="3.5" height="4" fill="#ffffff" stroke="#222" stroke-width="0.9" />
<rect x="280" y="567" width="724" height="9.5" fill="#b4b4b4" />
<rect x="280" y="567" width="10" height="9.5" fill="#d0d0d0" stroke="#a0a0a0" stroke-width="0.8" />
<path d="M287.5,569.5 L283.5,571.75 L287.5,574 Z" fill="#222"/>
<rect x="994.7" y="567" width="9.3" height="9.5" fill="#d0d0d0" stroke="#a0a0a0" stroke-width="0.8" />
<path d="M997.5,569.5 L1001.5,571.75 L997.5,574 Z" fill="#222"/>
<defs><linearGradient id="thumb" x1="0" y1="0" x2="0" y2="1"><stop offset="0" stop-color="#e8e8e8"/><stop offset="1" stop-color="#9a9a9a"/></linearGradient></defs>
<rect x="820.6" y="567" width="25.8" height="9.5" fill="url(#thumb)" stroke="#8a8a8a" stroke-width="0.6" />
<rect x="281" y="577" width="723" height="26" fill="#f5f5f5" />
<rect x="322.5" y="579" width="1" height="3" fill="#555" />
<text x="323" y="590.5" font-family="Liberation Sans" font-size="8.2" font-weight="400" fill="#151515" text-anchor="middle" textLength="15.6" lengthAdjust="spacingAndGlyphs" >99,46</text>
<rect x="363.21" y="579" width="1" height="3" fill="#555" />
<text x="363.71" y="590.5" font-family="Liberation Sans" font-size="8.2" font-weight="400" fill="#151515" text-anchor="middle" textLength="15.6" lengthAdjust="spacingAndGlyphs" >99,75</text>
<rect x="397.02" y="579" width="1" height="3" fill="#555" />
<text x="397.52" y="590.5" font-family="Liberation Sans" font-size="8.2" font-weight="400" fill="#151515" text-anchor="middle" textLength="10.2" lengthAdjust="spacingAndGlyphs" >100</text>
<rect x="430.83" y="579" width="1" height="3" fill="#555" />
<text x="431.33" y="590.5" font-family="Liberation Sans" font-size="8.2" font-weight="400" fill="#151515" text-anchor="middle" textLength="19.0" lengthAdjust="spacingAndGlyphs" >100,25</text>
<rect x="464.64" y="579" width="1" height="3" fill="#555" />
<text x="465.14" y="590.5" font-family="Liberation Sans" font-size="8.2" font-weight="400" fill="#151515" text-anchor="middle" textLength="15.6" lengthAdjust="spacingAndGlyphs" >100,5</text>
<rect x="498.45" y="579" width="1" height="3" fill="#555" />
<text x="498.95" y="590.5" font-family="Liberation Sans" font-size="8.2" font-weight="400" fill="#151515" text-anchor="middle" textLength="19.0" lengthAdjust="spacingAndGlyphs" >100,75</text>
<rect x="532.26" y="579" width="1" height="3" fill="#555" />
<text x="532.76" y="590.5" font-family="Liberation Sans" font-size="8.2" font-weight="400" fill="#151515" text-anchor="middle" textLength="10.2" lengthAdjust="spacingAndGlyphs" >101</text>
<rect x="566.0699999999999" y="579" width="1" height="3" fill="#555" />
<text x="566.5699999999999" y="590.5" font-family="Liberation Sans" font-size="8.2" font-weight="400" fill="#151515" text-anchor="middle" textLength="19.0" lengthAdjust="spacingAndGlyphs" >101,25</text>
<rect x="599.88" y="579" width="1" height="3" fill="#555" />
<text x="600.38" y="590.5" font-family="Liberation Sans" font-size="8.2" font-weight="400" fill="#151515" text-anchor="middle" textLength="15.6" lengthAdjust="spacingAndGlyphs" >101,5</text>
<rect x="633.69" y="579" width="1" height="3" fill="#555" />
<text x="634.19" y="590.5" font-family="Liberation Sans" font-size="8.2" font-weight="400" fill="#151515" text-anchor="middle" textLength="19.0" lengthAdjust="spacingAndGlyphs" >101,75</text>
<rect x="667.5" y="579" width="1" height="3" fill="#555" />
<text x="668.0" y="590.5" font-family="Liberation Sans" font-size="8.2" font-weight="400" fill="#151515" text-anchor="middle" textLength="10.2" lengthAdjust="spacingAndGlyphs" >102</text>
<rect x="701.31" y="579" width="1" height="3" fill="#555" />
<text x="701.81" y="590.5" font-family="Liberation Sans" font-size="8.2" font-weight="400" fill="#151515" text-anchor="middle" textLength="19.0" lengthAdjust="spacingAndGlyphs" >102,25</text>
<rect x="735.12" y="579" width="1" height="3" fill="#555" />
<text x="735.62" y="590.5" font-family="Liberation Sans" font-size="8.2" font-weight="400" fill="#151515" text-anchor="middle" textLength="15.6" lengthAdjust="spacingAndGlyphs" >102,5</text>
<rect x="768.9300000000001" y="579" width="1" height="3" fill="#555" />
<text x="769.4300000000001" y="590.5" font-family="Liberation Sans" font-size="8.2" font-weight="400" fill="#151515" text-anchor="middle" textLength="19.0" lengthAdjust="spacingAndGlyphs" >102,75</text>
<rect x="802.74" y="579" width="1" height="3" fill="#555" />
<text x="803.24" y="590.5" font-family="Liberation Sans" font-size="8.2" font-weight="400" fill="#151515" text-anchor="middle" textLength="10.2" lengthAdjust="spacingAndGlyphs" >103</text>
<rect x="836.55" y="579" width="1" height="3" fill="#555" />
<text x="837.05" y="590.5" font-family="Liberation Sans" font-size="8.2" font-weight="400" fill="#151515" text-anchor="middle" textLength="19.0" lengthAdjust="spacingAndGlyphs" >103,25</text>
<rect x="870.36" y="579" width="1" height="3" fill="#555" />
<text x="870.86" y="590.5" font-family="Liberation Sans" font-size="8.2" font-weight="400" fill="#151515" text-anchor="middle" textLength="15.6" lengthAdjust="spacingAndGlyphs" >103,5</text>
<rect x="904.17" y="579" width="1" height="3" fill="#555" />
<text x="904.67" y="590.5" font-family="Liberation Sans" font-size="8.2" font-weight="400" fill="#151515" text-anchor="middle" textLength="19.0" lengthAdjust="spacingAndGlyphs" >103,75</text>
<rect x="937.98" y="579" width="1" height="3" fill="#555" />
<text x="938.48" y="590.5" font-family="Liberation Sans" font-size="8.2" font-weight="400" fill="#151515" text-anchor="middle" textLength="10.2" lengthAdjust="spacingAndGlyphs" >104</text>
<rect x="971.7900000000001" y="579" width="1" height="3" fill="#555" />
<text x="972.2900000000001" y="590.5" font-family="Liberation Sans" font-size="8.2" font-weight="400" fill="#151515" text-anchor="middle" textLength="19.0" lengthAdjust="spacingAndGlyphs" >104,25</text>
<rect x="999.5" y="579" width="1" height="3" fill="#555" />
<text x="1000" y="590.5" font-family="Liberation Sans" font-size="8.2" font-weight="400" fill="#151515" text-anchor="middle" textLength="19.0" lengthAdjust="spacingAndGlyphs" >104,46</text>
<rect x="329.4" y="579" width="1" height="3" fill="#555" />
<text x="660" y="600.5" font-family="Liberation Sans" font-size="7.6" font-weight="400" fill="#151515" text-anchor="middle" textLength="44" lengthAdjust="spacingAndGlyphs" >Distancia (km)</text>
<rect x="267" y="603" width="757" height="15" fill="#f0f0f0" />
<rect x="267" y="602.8" width="757" height="2.6" fill="#dcdcdc" />
<text x="270" y="614.4" font-family="Liberation Sans" font-size="7.6" font-weight="400" fill="#000" text-anchor="start" textLength="575" lengthAdjust="spacingAndGlyphs" >En 4:03:44 (102,4 km): Potencia: 644 W; Velocid 64,2 km/h; Viento 78,3 km/h; Elvacion 77 m; Pendient -6,3%; HR 135 bpm; Cadencia 111 rpm; Desarrollo 4,57; Ratio de registro = 1 s</text>
</svg></body></html>
